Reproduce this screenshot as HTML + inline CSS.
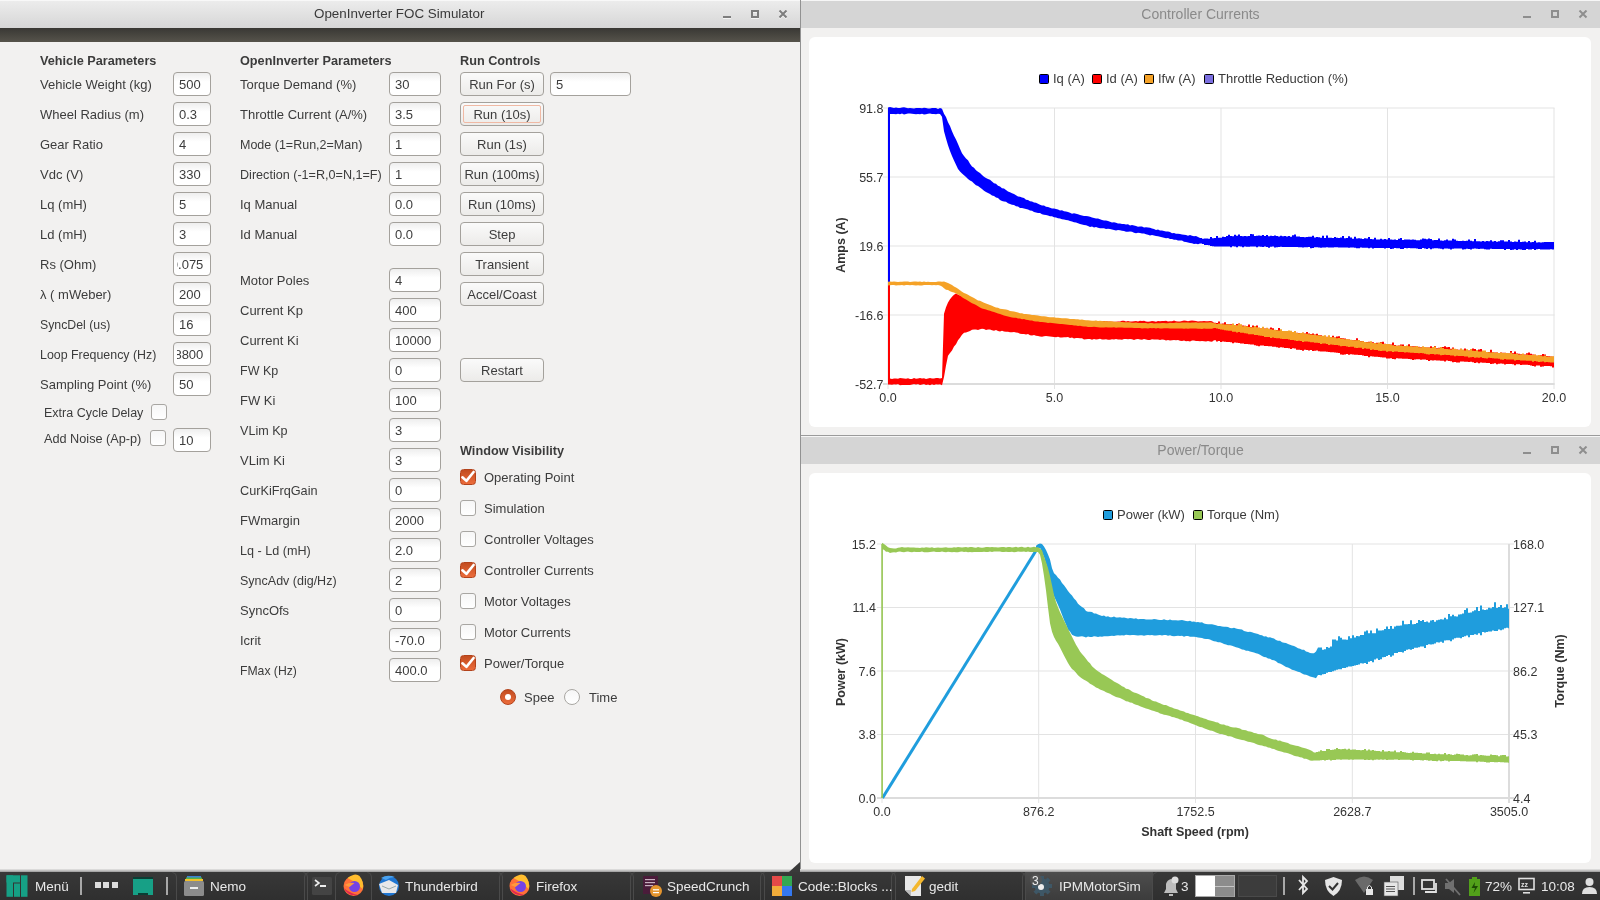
<!DOCTYPE html><html><head><meta charset="utf-8"><style>
*{margin:0;padding:0;box-sizing:border-box}
html,body{width:1600px;height:900px;overflow:hidden;background:#f2f1f0;font-family:"Liberation Sans",sans-serif;color:#3c3c3c}
.ab{position:absolute}
.t{position:absolute;white-space:nowrap;font-size:13px;line-height:16px}
.inp{position:absolute;height:24px;border:1px solid #a4a19c;border-radius:4px;background:linear-gradient(#eeeeee,#ffffff 40%,#ffffff);font-size:13px;line-height:23px;padding-left:5px;overflow:hidden;white-space:nowrap;color:#3c3c3c}
.btn{position:absolute;height:24px;width:84px;border:1px solid #a4a19c;border-radius:4px;background:linear-gradient(#fafafa,#ecebe9);font-size:13px;line-height:23px;text-align:center;white-space:nowrap;color:#3c3c3c}
.cb{position:absolute;width:16px;height:16px;border:1px solid #a8a6a2;border-radius:3px;background:linear-gradient(#f6f6f6,#ffffff)}
.cbon{position:absolute;width:16px;height:16px;border-radius:3.5px;background:linear-gradient(#c24c1f,#ec6c3b);border:1px solid #b3421a}
.hd{position:absolute;white-space:nowrap;font-size:12.7px;font-weight:bold;line-height:16px;color:#3c3c3c}

</style></head><body>
<div style="will-change:transform;position:absolute;left:0;top:0;width:1600px;height:900px">
<div class="ab" style="left:0;top:0;width:800px;height:28px;background:linear-gradient(#ececec,#d6d6d6);border-top:1px solid #f8f8f8"></div>
<div class="t" style="left:314px;top:6px;font-size:13.4px;color:#3a3a3a">OpenInverter FOC Simulator</div>
<svg class="ab" style="left:723px;top:10px" width="70" height="12" viewBox="0 0 70 12"><g transform="translate(0,1)"><rect x="0" y="6" width="8" height="2" fill="#f4f4f4"/><rect x="29" y="1" width="6" height="6" fill="none" stroke="#f4f4f4" stroke-width="2"/><path d="M56.5 0.5 L63.5 7.5 M63.5 0.5 L56.5 7.5" stroke="#f4f4f4" stroke-width="2"/></g><rect x="0" y="6" width="8" height="2" fill="#7d7d7d"/><rect x="29" y="1" width="6" height="6" fill="none" stroke="#7d7d7d" stroke-width="2"/><path d="M56.5 0.5 L63.5 7.5 M63.5 0.5 L56.5 7.5" stroke="#7d7d7d" stroke-width="2"/></svg>
<div class="ab" style="left:0;top:28px;width:800px;height:14px;background:linear-gradient(#393834,#56534b)"></div>
<div class="hd" style="left:40px;top:53px">Vehicle Parameters</div>
<div class="t" style="left:40px;top:77px;">Vehicle Weight (kg)</div>
<div class="inp" style="left:173px;top:72px;width:38px">500</div>
<div class="t" style="left:40px;top:107px;">Wheel Radius (m)</div>
<div class="inp" style="left:173px;top:102px;width:38px">0.3</div>
<div class="t" style="left:40px;top:137px;">Gear Ratio</div>
<div class="inp" style="left:173px;top:132px;width:38px">4</div>
<div class="t" style="left:40px;top:167px;">Vdc (V)</div>
<div class="inp" style="left:173px;top:162px;width:38px">330</div>
<div class="t" style="left:40px;top:197px;">Lq (mH)</div>
<div class="inp" style="left:173px;top:192px;width:38px">5</div>
<div class="t" style="left:40px;top:227px;">Ld (mH)</div>
<div class="inp" style="left:173px;top:222px;width:38px">3</div>
<div class="t" style="left:40px;top:257px;">Rs (Ohm)</div>
<div class="inp" style="left:173px;top:252px;width:38px;padding-left:0"><div class="ab" style="left:3px;top:0;right:1px;bottom:0;overflow:hidden"><span style="position:absolute;left:-6.2px">0.075</span></div></div>
<div class="t" style="left:40px;top:287px;">λ ( mWeber)</div>
<div class="inp" style="left:173px;top:282px;width:38px">200</div>
<div class="t" style="left:40px;top:317px;font-size:12.3px;">SyncDel (us)</div>
<div class="inp" style="left:173px;top:312px;width:38px">16</div>
<div class="t" style="left:40px;top:347px;font-size:12.4px;">Loop Frequency (Hz)</div>
<div class="inp" style="left:173px;top:342px;width:38px;padding-left:0"><div class="ab" style="left:3px;top:0;right:1px;bottom:0;overflow:hidden"><span style="position:absolute;left:-2.6px">8800</span></div></div>
<div class="t" style="left:40px;top:377px;">Sampling Point (%)</div>
<div class="inp" style="left:173px;top:372px;width:38px">50</div>
<div class="t" style="left:44px;top:405px;font-size:12.5px">Extra Cycle Delay</div>
<div class="cb" style="left:151px;top:404px"></div>
<div class="t" style="left:44px;top:431px;font-size:12.7px">Add Noise (Ap-p)</div>
<div class="cb" style="left:150px;top:430px"></div>
<div class="inp" style="left:173px;top:428px;width:38px">10</div>
<div class="hd" style="left:240px;top:53px">OpenInverter Parameters</div>
<div class="t" style="left:240px;top:77px;">Torque Demand (%)</div>
<div class="inp" style="left:389px;top:72px;width:52px">30</div>
<div class="t" style="left:240px;top:107px;">Throttle Current (A/%)</div>
<div class="inp" style="left:389px;top:102px;width:52px">3.5</div>
<div class="t" style="left:240px;top:137px;font-size:12.5px;">Mode (1=Run,2=Man)</div>
<div class="inp" style="left:389px;top:132px;width:52px">1</div>
<div class="t" style="left:240px;top:167px;font-size:12.6px;">Direction (-1=R,0=N,1=F)</div>
<div class="inp" style="left:389px;top:162px;width:52px">1</div>
<div class="t" style="left:240px;top:197px;">Iq Manual</div>
<div class="inp" style="left:389px;top:192px;width:52px">0.0</div>
<div class="t" style="left:240px;top:227px;">Id Manual</div>
<div class="inp" style="left:389px;top:222px;width:52px">0.0</div>
<div class="t" style="left:240px;top:273px;">Motor Poles</div>
<div class="inp" style="left:389px;top:268px;width:52px">4</div>
<div class="t" style="left:240px;top:303px;">Current Kp</div>
<div class="inp" style="left:389px;top:298px;width:52px">400</div>
<div class="t" style="left:240px;top:333px;">Current Ki</div>
<div class="inp" style="left:389px;top:328px;width:52px">10000</div>
<div class="t" style="left:240px;top:363px;font-size:12.5px;">FW Kp</div>
<div class="inp" style="left:389px;top:358px;width:52px">0</div>
<div class="t" style="left:240px;top:393px;">FW Ki</div>
<div class="inp" style="left:389px;top:388px;width:52px">100</div>
<div class="t" style="left:240px;top:423px;font-size:12.6px;">VLim Kp</div>
<div class="inp" style="left:389px;top:418px;width:52px">3</div>
<div class="t" style="left:240px;top:453px;">VLim Ki</div>
<div class="inp" style="left:389px;top:448px;width:52px">3</div>
<div class="t" style="left:240px;top:483px;font-size:12.7px;">CurKiFrqGain</div>
<div class="inp" style="left:389px;top:478px;width:52px">0</div>
<div class="t" style="left:240px;top:513px;">FWmargin</div>
<div class="inp" style="left:389px;top:508px;width:52px">2000</div>
<div class="t" style="left:240px;top:543px;font-size:12.6px;">Lq - Ld (mH)</div>
<div class="inp" style="left:389px;top:538px;width:52px">2.0</div>
<div class="t" style="left:240px;top:573px;font-size:12.5px;">SyncAdv (dig/Hz)</div>
<div class="inp" style="left:389px;top:568px;width:52px">2</div>
<div class="t" style="left:240px;top:603px;">SyncOfs</div>
<div class="inp" style="left:389px;top:598px;width:52px">0</div>
<div class="t" style="left:240px;top:633px;">Icrit</div>
<div class="inp" style="left:389px;top:628px;width:52px">-70.0</div>
<div class="t" style="left:240px;top:663px;font-size:12.2px;">FMax (Hz)</div>
<div class="inp" style="left:389px;top:658px;width:52px">400.0</div>
<div class="hd" style="left:460px;top:53px">Run Controls</div>
<div class="btn" style="left:460px;top:72px">Run For (s)</div>
<div class="btn" style="left:460px;top:102px"><div class="ab" style="left:2px;top:2px;right:2px;bottom:2px;border:1px solid #f0b9a4;border-radius:2px"></div>Run (10s)</div>
<div class="btn" style="left:460px;top:132px">Run (1s)</div>
<div class="btn" style="left:460px;top:162px">Run (100ms)</div>
<div class="btn" style="left:460px;top:192px">Run (10ms)</div>
<div class="btn" style="left:460px;top:222px">Step</div>
<div class="btn" style="left:460px;top:252px">Transient</div>
<div class="btn" style="left:460px;top:282px">Accel/Coast</div>
<div class="btn" style="left:460px;top:358px">Restart</div>
<div class="inp" style="left:550px;top:72px;width:81px">5</div>
<div class="hd" style="left:460px;top:443px">Window Visibility</div>
<div class="cbon" style="left:460px;top:469px"><svg class="ab" style="left:-1px;top:-1px" width="16" height="16" viewBox="0 0 16 16"><path d="M2.4 8.3 L6.4 11.9 L13.6 3" fill="none" stroke="#fff" stroke-width="2.6" stroke-linecap="round" stroke-linejoin="round"/></svg></div>
<div class="t" style="left:484px;top:470px">Operating Point</div>
<div class="cb" style="left:460px;top:500px"></div>
<div class="t" style="left:484px;top:501px">Simulation</div>
<div class="cb" style="left:460px;top:531px"></div>
<div class="t" style="left:484px;top:532px">Controller Voltages</div>
<div class="cbon" style="left:460px;top:562px"><svg class="ab" style="left:-1px;top:-1px" width="16" height="16" viewBox="0 0 16 16"><path d="M2.4 8.3 L6.4 11.9 L13.6 3" fill="none" stroke="#fff" stroke-width="2.6" stroke-linecap="round" stroke-linejoin="round"/></svg></div>
<div class="t" style="left:484px;top:563px">Controller Currents</div>
<div class="cb" style="left:460px;top:593px"></div>
<div class="t" style="left:484px;top:594px">Motor Voltages</div>
<div class="cb" style="left:460px;top:624px"></div>
<div class="t" style="left:484px;top:625px">Motor Currents</div>
<div class="cbon" style="left:460px;top:655px"><svg class="ab" style="left:-1px;top:-1px" width="16" height="16" viewBox="0 0 16 16"><path d="M2.4 8.3 L6.4 11.9 L13.6 3" fill="none" stroke="#fff" stroke-width="2.6" stroke-linecap="round" stroke-linejoin="round"/></svg></div>
<div class="t" style="left:484px;top:656px">Power/Torque</div>
<div class="ab" style="left:500px;top:689px;width:16px;height:16px;border-radius:50%;background:linear-gradient(#c24c1f,#ec6c3b);border:1px solid #b3421a"><div class="ab" style="left:4px;top:4px;width:6px;height:6px;border-radius:50%;background:#fff"></div></div>
<div class="t" style="left:524px;top:690px;width:29.5px;overflow:hidden">Speed</div>
<div class="ab" style="left:564px;top:689px;width:16px;height:16px;border-radius:50%;background:linear-gradient(#f6f6f6,#fff);border:1px solid #a8a6a2"></div>
<div class="t" style="left:589px;top:690px">Time</div>
<div class="ab" style="left:800px;top:0;width:1px;height:872px;background:#929292"></div>
<div class="ab" style="left:801px;top:0px;width:799px;height:1px;background:#f6f6f6"></div>
<div class="ab" style="left:801px;top:1px;width:799px;height:27px;background:#d5d5d5"></div>
<div class="t" style="left:801px;width:799px;text-align:center;top:6px;font-size:14px;color:#8a8a8a">Controller Currents</div>
<svg class="ab" style="left:1523px;top:10px" width="70" height="12" viewBox="0 0 70 12"><rect x="0" y="6" width="8" height="2" fill="#8e8e8e"/><rect x="29" y="1" width="6" height="6" fill="none" stroke="#8e8e8e" stroke-width="2"/><path d="M56.5 0.5 L63.5 7.5 M63.5 0.5 L56.5 7.5" stroke="#8e8e8e" stroke-width="2"/></svg>
<div class="ab" style="left:801px;top:435px;width:799px;height:1px;background:#9b9b9b"></div>
<div class="ab" style="left:801px;top:436px;width:799px;height:1px;background:#f6f6f6"></div>
<div class="ab" style="left:801px;top:437px;width:799px;height:27px;background:#d5d5d5"></div>
<div class="t" style="left:801px;width:799px;text-align:center;top:442px;font-size:14px;color:#8a8a8a">Power/Torque</div>
<svg class="ab" style="left:1523px;top:446px" width="70" height="12" viewBox="0 0 70 12"><rect x="0" y="6" width="8" height="2" fill="#8e8e8e"/><rect x="29" y="1" width="6" height="6" fill="none" stroke="#8e8e8e" stroke-width="2"/><path d="M56.5 0.5 L63.5 7.5 M63.5 0.5 L56.5 7.5" stroke="#8e8e8e" stroke-width="2"/></svg>
<div class="ab" style="left:809px;top:37px;width:782px;height:390px;background:#fff;border-radius:6px"></div>
<div class="ab" style="left:809px;top:473px;width:782px;height:390px;background:#fff;border-radius:6px"></div>
<svg class="ab" style="left:0;top:0" width="1600" height="900" viewBox="0 0 1600 900">
<g font-family="Liberation Sans, sans-serif" fill="#333">
<rect x="887.5" y="108" width="1" height="281" fill="#e3e3e3"/>
<rect x="1054.0" y="108" width="1" height="281" fill="#e3e3e3"/>
<rect x="1220.5" y="108" width="1" height="281" fill="#e3e3e3"/>
<rect x="1387.0" y="108" width="1" height="281" fill="#e3e3e3"/>
<rect x="1553.5" y="108" width="1" height="281" fill="#e3e3e3"/>
<rect x="883" y="107.5" width="671.5" height="1" fill="#e3e3e3"/>
<rect x="883" y="176.5" width="671.5" height="1" fill="#e3e3e3"/>
<rect x="883" y="245.5" width="671.5" height="1" fill="#e3e3e3"/>
<rect x="883" y="314.5" width="671.5" height="1" fill="#e3e3e3"/>
<rect x="883" y="383.5" width="671.5" height="1" fill="#e3e3e3"/>
<rect x="883" y="383" width="671.5" height="2" fill="#dcdcdc"/>
<text x="883.5" y="112.5" font-size="12.5" text-anchor="end">91.8</text>
<text x="883.5" y="181.5" font-size="12.5" text-anchor="end">55.7</text>
<text x="883.5" y="250.5" font-size="12.5" text-anchor="end">19.6</text>
<text x="883.5" y="319.5" font-size="12.5" text-anchor="end">-16.6</text>
<text x="883.5" y="388.5" font-size="12.5" text-anchor="end">-52.7</text>
<text x="888.0" y="401.5" font-size="12.5" text-anchor="middle">0.0</text>
<text x="1054.5" y="401.5" font-size="12.5" text-anchor="middle">5.0</text>
<text x="1221.0" y="401.5" font-size="12.5" text-anchor="middle">10.0</text>
<text x="1387.5" y="401.5" font-size="12.5" text-anchor="middle">15.0</text>
<text x="1554.0" y="401.5" font-size="12.5" text-anchor="middle">20.0</text>
<text transform="translate(845,245) rotate(-90)" font-size="12.5" font-weight="bold" text-anchor="middle">Amps (A)</text>
<rect x="1039.5" y="74.5" width="9" height="9" rx="1" fill="#0000ff" stroke="#000" stroke-width="1"/>
<text x="1053" y="83" font-size="13" fill="#3a3a3a">Iq (A)</text>
<rect x="1092.5" y="74.5" width="9" height="9" rx="1" fill="#ff0000" stroke="#000" stroke-width="1"/>
<text x="1106" y="83" font-size="13" fill="#3a3a3a">Id (A)</text>
<rect x="1144.5" y="74.5" width="9" height="9" rx="1" fill="#f5a227" stroke="#000" stroke-width="1"/>
<text x="1158" y="83" font-size="13" fill="#3a3a3a">Ifw (A)</text>
<rect x="1204.5" y="74.5" width="9" height="9" rx="1" fill="#7b6fe0" stroke="#000" stroke-width="1"/>
<text x="1218" y="83" font-size="13" fill="#3a3a3a">Throttle Reduction (%)</text>
</g>
<rect x="888" y="108" width="2" height="176" fill="#0000ff"/>
<polygon points="888.0,107.5 890.0,107.1 892.0,107.6 894.0,107.9 896.0,107.5 898.0,108.1 900.0,108.1 902.0,107.6 904.0,107.3 906.0,107.7 908.0,108.2 910.0,107.9 912.0,108.3 914.0,108.5 916.0,108.1 918.0,108.0 920.0,108.1 922.0,108.2 924.0,107.7 926.0,107.9 928.0,108.4 930.0,108.5 932.0,108.1 934.0,108.0 936.0,107.9 938.0,108.9 940.0,108.1 942.0,108.8 944.0,113.7 946.0,117.0 948.0,122.2 950.0,125.9 952.0,131.2 954.0,135.7 956.0,139.4 958.0,144.0 960.0,148.7 962.0,153.2 964.0,155.9 966.0,158.4 968.0,160.3 970.0,163.7 972.0,166.5 974.0,167.8 976.0,170.2 978.0,171.8 980.0,172.9 982.0,175.0 984.0,176.8 986.0,177.9 988.0,179.1 990.0,179.8 992.0,181.5 994.0,183.2 996.0,183.8 998.0,185.8 1000.0,186.6 1002.0,188.3 1004.0,188.6 1006.0,190.1 1008.0,191.4 1010.0,192.2 1012.0,193.2 1014.0,193.9 1016.0,195.3 1018.0,196.4 1020.0,196.8 1022.0,197.5 1024.0,198.0 1026.0,199.7 1028.0,200.1 1030.0,201.2 1032.0,201.6 1034.0,202.6 1036.0,202.7 1038.0,203.7 1040.0,204.8 1042.0,205.6 1044.0,205.5 1046.0,206.8 1048.0,206.9 1050.0,207.7 1052.0,208.5 1054.0,208.4 1056.0,209.0 1058.0,209.4 1060.0,210.4 1062.0,210.3 1064.0,211.3 1066.0,211.4 1068.0,212.1 1070.0,212.7 1072.0,213.7 1074.0,213.2 1076.0,213.8 1078.0,214.2 1080.0,214.9 1082.0,215.6 1084.0,216.1 1086.0,216.0 1088.0,216.2 1090.0,216.7 1092.0,217.5 1094.0,218.0 1096.0,218.6 1098.0,218.4 1100.0,219.3 1102.0,219.9 1104.0,220.6 1106.0,220.5 1108.0,220.9 1110.0,221.7 1112.0,222.6 1114.0,222.3 1116.0,222.7 1118.0,223.5 1120.0,223.6 1122.0,224.1 1124.0,224.0 1126.0,224.6 1128.0,224.2 1130.0,225.4 1132.0,224.9 1134.0,225.4 1136.0,226.1 1138.0,226.7 1140.0,226.5 1142.0,226.4 1144.0,227.4 1146.0,227.2 1148.0,227.6 1150.0,227.8 1152.0,228.4 1154.0,229.0 1156.0,229.9 1158.0,229.6 1160.0,230.5 1162.0,230.5 1164.0,231.0 1166.0,231.6 1168.0,231.5 1170.0,231.9 1172.0,233.2 1174.0,233.1 1176.0,233.8 1178.0,233.7 1180.0,234.1 1182.0,234.6 1184.0,234.7 1186.0,235.0 1188.0,235.7 1190.0,235.1 1192.0,235.8 1194.0,236.2 1196.0,235.9 1198.0,236.9 1200.0,237.9 1202.0,237.9 1202.0,238.8 1204.0,238.8 1204.0,238.4 1206.0,238.4 1206.0,238.6 1208.0,238.6 1208.0,238.8 1210.0,238.8 1210.0,237.1 1212.0,237.1 1212.0,238.3 1214.0,238.3 1214.0,238.1 1216.0,238.1 1216.0,235.9 1218.0,235.9 1218.0,237.8 1220.0,237.8 1220.0,237.7 1222.0,237.7 1222.0,236.7 1224.0,236.7 1224.0,237.1 1226.0,237.1 1226.0,236.1 1228.0,236.1 1228.0,234.8 1230.0,234.8 1230.0,236.1 1232.0,236.1 1232.0,236.3 1234.0,236.3 1234.0,234.8 1236.0,234.8 1236.0,235.8 1238.0,235.8 1238.0,234.5 1240.0,234.5 1240.0,236.0 1242.0,236.0 1242.0,236.2 1244.0,236.2 1244.0,235.9 1246.0,235.9 1246.0,236.2 1248.0,236.2 1248.0,236.1 1250.0,236.1 1250.0,233.9 1252.0,233.9 1252.0,234.2 1254.0,234.2 1254.0,236.0 1256.0,236.0 1256.0,235.8 1258.0,235.8 1258.0,235.6 1260.0,235.6 1260.0,235.7 1262.0,235.7 1262.0,235.0 1264.0,235.0 1264.0,235.9 1266.0,235.9 1266.0,234.9 1268.0,234.9 1268.0,236.3 1270.0,236.3 1270.0,235.7 1272.0,235.7 1272.0,236.0 1274.0,236.0 1274.0,235.6 1276.0,235.6 1276.0,236.1 1278.0,236.1 1278.0,236.5 1280.0,236.5 1280.0,235.8 1282.0,235.8 1282.0,236.2 1284.0,236.2 1284.0,235.9 1286.0,235.9 1286.0,236.4 1288.0,236.4 1288.0,236.1 1290.0,236.1 1290.0,236.8 1292.0,236.8 1292.0,235.2 1294.0,235.2 1294.0,234.5 1296.0,234.5 1296.0,236.5 1298.0,236.5 1298.0,236.5 1300.0,236.5 1300.0,237.1 1302.0,237.1 1302.0,236.9 1304.0,236.9 1304.0,237.2 1306.0,237.2 1306.0,236.9 1308.0,236.9 1308.0,236.8 1310.0,236.8 1310.0,236.8 1312.0,236.8 1312.0,235.7 1314.0,235.7 1314.0,237.5 1316.0,237.5 1316.0,237.1 1318.0,237.1 1318.0,237.2 1320.0,237.2 1320.0,237.8 1322.0,237.8 1322.0,235.7 1324.0,235.7 1324.0,237.9 1326.0,237.9 1326.0,235.6 1328.0,235.6 1328.0,237.8 1330.0,237.8 1330.0,237.7 1332.0,237.7 1332.0,238.1 1334.0,238.1 1334.0,236.9 1336.0,236.9 1336.0,237.7 1338.0,237.7 1338.0,238.0 1340.0,238.0 1340.0,237.6 1342.0,237.6 1342.0,236.1 1344.0,236.1 1344.0,238.3 1346.0,238.3 1346.0,238.0 1348.0,238.0 1348.0,236.2 1350.0,236.2 1350.0,237.4 1352.0,237.4 1352.0,238.7 1354.0,238.7 1354.0,236.7 1356.0,236.7 1356.0,238.5 1358.0,238.5 1358.0,238.2 1360.0,238.2 1360.0,238.5 1362.0,238.5 1362.0,238.9 1364.0,238.9 1364.0,238.3 1366.0,238.3 1366.0,238.4 1368.0,238.4 1368.0,236.9 1370.0,236.9 1370.0,238.9 1372.0,238.9 1372.0,239.3 1374.0,239.3 1374.0,237.8 1376.0,237.8 1376.0,239.4 1378.0,239.4 1378.0,239.5 1380.0,239.5 1380.0,238.8 1382.0,238.8 1382.0,239.5 1384.0,239.5 1384.0,239.0 1386.0,239.0 1386.0,239.5 1388.0,239.5 1388.0,237.9 1390.0,237.9 1390.0,239.4 1392.0,239.4 1392.0,239.7 1394.0,239.7 1394.0,239.5 1396.0,239.5 1396.0,240.0 1398.0,240.0 1398.0,238.7 1400.0,238.7 1400.0,238.1 1402.0,238.1 1402.0,239.9 1404.0,239.9 1404.0,239.5 1406.0,239.5 1406.0,239.6 1408.0,239.6 1408.0,239.6 1410.0,239.6 1410.0,239.7 1412.0,239.7 1412.0,239.5 1414.0,239.5 1414.0,239.7 1416.0,239.7 1416.0,240.3 1418.0,240.3 1418.0,240.3 1420.0,240.3 1420.0,239.6 1422.0,239.6 1422.0,238.4 1424.0,238.4 1424.0,238.7 1426.0,238.7 1426.0,239.2 1428.0,239.2 1428.0,238.5 1430.0,238.5 1430.0,239.0 1432.0,239.0 1432.0,240.2 1434.0,240.2 1434.0,239.9 1436.0,239.9 1436.0,239.9 1438.0,239.9 1438.0,238.4 1440.0,238.4 1440.0,240.4 1442.0,240.4 1442.0,240.7 1444.0,240.7 1444.0,240.2 1446.0,240.2 1446.0,239.5 1448.0,239.5 1448.0,240.5 1450.0,240.5 1450.0,240.5 1452.0,240.5 1452.0,238.8 1454.0,238.8 1454.0,239.5 1456.0,239.5 1456.0,240.7 1458.0,240.7 1458.0,240.9 1460.0,240.9 1460.0,241.1 1462.0,241.1 1462.0,240.8 1464.0,240.8 1464.0,241.0 1466.0,241.0 1466.0,240.7 1468.0,240.7 1468.0,239.6 1470.0,239.6 1470.0,240.8 1472.0,240.8 1472.0,241.2 1474.0,241.2 1474.0,238.9 1476.0,238.9 1476.0,241.2 1478.0,241.2 1478.0,241.2 1480.0,241.2 1480.0,241.4 1482.0,241.4 1482.0,241.1 1484.0,241.1 1484.0,241.5 1486.0,241.5 1486.0,241.0 1488.0,241.0 1488.0,241.2 1490.0,241.2 1490.0,240.3 1492.0,240.3 1492.0,241.4 1494.0,241.4 1494.0,241.1 1496.0,241.1 1496.0,241.8 1498.0,241.8 1498.0,241.2 1500.0,241.2 1500.0,240.2 1502.0,240.2 1502.0,240.2 1504.0,240.2 1504.0,241.4 1506.0,241.4 1506.0,241.5 1508.0,241.5 1508.0,239.9 1510.0,239.9 1510.0,241.4 1512.0,241.4 1512.0,241.9 1514.0,241.9 1514.0,241.5 1516.0,241.5 1516.0,241.8 1518.0,241.8 1518.0,239.8 1520.0,239.8 1520.0,242.0 1522.0,242.0 1522.0,241.8 1524.0,241.8 1524.0,241.6 1526.0,241.6 1526.0,242.2 1528.0,242.2 1528.0,240.9 1530.0,240.9 1530.0,242.2 1532.0,242.2 1532.0,242.0 1534.0,242.0 1534.0,240.7 1536.0,240.7 1536.0,242.4 1538.0,242.4 1538.0,242.3 1540.0,242.3 1540.0,242.5 1542.0,242.5 1542.0,242.3 1544.0,242.3 1544.0,242.0 1546.0,242.0 1546.0,242.0 1548.0,242.0 1548.0,242.0 1550.0,242.0 1550.0,242.0 1552.0,242.0 1552.0,242.1 1554.0,242.1 1554.0,242.6 1554.0,242.6 1554.0,249.3 1554.0,249.3 1554.0,249.5 1552.0,249.5 1552.0,249.2 1550.0,249.2 1550.0,249.4 1548.0,249.4 1548.0,249.4 1546.0,249.4 1546.0,249.6 1544.0,249.6 1544.0,249.4 1542.0,249.4 1542.0,249.4 1540.0,249.4 1540.0,249.1 1538.0,249.1 1538.0,249.2 1536.0,249.2 1536.0,249.9 1534.0,249.9 1534.0,249.1 1532.0,249.1 1532.0,249.4 1530.0,249.4 1530.0,249.4 1528.0,249.4 1528.0,249.0 1526.0,249.0 1526.0,250.0 1524.0,250.0 1524.0,250.1 1522.0,250.1 1522.0,249.4 1520.0,249.4 1520.0,249.2 1518.0,249.2 1518.0,250.1 1516.0,250.1 1516.0,249.3 1514.0,249.3 1514.0,249.7 1512.0,249.7 1512.0,250.1 1510.0,250.1 1510.0,249.1 1508.0,249.1 1508.0,249.0 1506.0,249.0 1506.0,249.9 1504.0,249.9 1504.0,249.1 1502.0,249.1 1502.0,249.0 1500.0,249.0 1500.0,249.0 1498.0,249.0 1498.0,249.0 1496.0,249.0 1496.0,248.9 1494.0,248.9 1494.0,249.0 1492.0,249.0 1492.0,248.7 1490.0,248.7 1490.0,249.4 1488.0,249.4 1488.0,249.5 1486.0,249.5 1486.0,249.3 1484.0,249.3 1484.0,248.7 1482.0,248.7 1482.0,248.7 1480.0,248.7 1480.0,248.9 1478.0,248.9 1478.0,248.8 1476.0,248.8 1476.0,248.6 1474.0,248.6 1474.0,248.7 1472.0,248.7 1472.0,249.4 1470.0,249.4 1470.0,248.9 1468.0,248.9 1468.0,248.8 1466.0,248.8 1466.0,249.3 1464.0,249.3 1464.0,249.6 1462.0,249.6 1462.0,248.5 1460.0,248.5 1460.0,248.6 1458.0,248.6 1458.0,248.6 1456.0,248.6 1456.0,248.4 1454.0,248.4 1454.0,248.7 1452.0,248.7 1452.0,249.4 1450.0,249.4 1450.0,248.7 1448.0,248.7 1448.0,248.4 1446.0,248.4 1446.0,248.5 1444.0,248.5 1444.0,249.2 1442.0,249.2 1442.0,248.7 1440.0,248.7 1440.0,248.4 1438.0,248.4 1438.0,248.3 1436.0,248.3 1436.0,248.3 1434.0,248.3 1434.0,248.4 1432.0,248.4 1432.0,249.2 1430.0,249.2 1430.0,248.2 1428.0,248.2 1428.0,248.9 1426.0,248.9 1426.0,248.5 1424.0,248.5 1424.0,248.1 1422.0,248.1 1422.0,248.9 1420.0,248.9 1420.0,248.9 1418.0,248.9 1418.0,248.4 1416.0,248.4 1416.0,248.2 1414.0,248.2 1414.0,248.3 1412.0,248.3 1412.0,248.3 1410.0,248.3 1410.0,248.1 1408.0,248.1 1408.0,248.2 1406.0,248.2 1406.0,248.1 1404.0,248.1 1404.0,249.0 1402.0,249.0 1402.0,249.0 1400.0,249.0 1400.0,248.2 1398.0,248.2 1398.0,248.2 1396.0,248.2 1396.0,248.1 1394.0,248.1 1394.0,248.7 1392.0,248.7 1392.0,248.9 1390.0,248.9 1390.0,248.0 1388.0,248.0 1388.0,247.9 1386.0,247.9 1386.0,248.6 1384.0,248.6 1384.0,247.9 1382.0,247.9 1382.0,247.9 1380.0,247.9 1380.0,247.9 1378.0,247.9 1378.0,248.0 1376.0,248.0 1376.0,247.9 1374.0,247.9 1374.0,248.6 1372.0,248.6 1372.0,247.7 1370.0,247.7 1370.0,248.2 1368.0,248.2 1368.0,247.7 1366.0,247.7 1366.0,247.8 1364.0,247.8 1364.0,247.7 1362.0,247.7 1362.0,247.6 1360.0,247.6 1360.0,248.2 1358.0,248.2 1358.0,248.3 1356.0,248.3 1356.0,247.7 1354.0,247.7 1354.0,247.4 1352.0,247.4 1352.0,247.6 1350.0,247.6 1350.0,247.7 1348.0,247.7 1348.0,247.4 1346.0,247.4 1346.0,247.6 1344.0,247.6 1344.0,247.6 1342.0,247.6 1342.0,247.4 1340.0,247.4 1340.0,247.5 1338.0,247.5 1338.0,247.3 1336.0,247.3 1336.0,247.3 1334.0,247.3 1334.0,247.4 1332.0,247.4 1332.0,247.5 1330.0,247.5 1330.0,247.6 1328.0,247.6 1328.0,247.3 1326.0,247.3 1326.0,247.5 1324.0,247.5 1324.0,247.5 1322.0,247.5 1322.0,247.7 1320.0,247.7 1320.0,247.4 1318.0,247.4 1318.0,247.2 1316.0,247.2 1316.0,247.2 1314.0,247.2 1314.0,247.9 1312.0,247.9 1312.0,248.2 1310.0,248.2 1310.0,247.0 1308.0,247.0 1308.0,247.2 1306.0,247.2 1306.0,247.3 1304.0,247.3 1304.0,247.6 1302.0,247.6 1302.0,247.2 1300.0,247.2 1300.0,247.2 1298.0,247.2 1298.0,247.0 1296.0,247.0 1296.0,246.9 1294.0,246.9 1294.0,247.1 1292.0,247.1 1292.0,247.0 1290.0,247.0 1290.0,246.9 1288.0,246.9 1288.0,247.1 1286.0,247.1 1286.0,247.0 1284.0,247.0 1284.0,247.0 1282.0,247.0 1282.0,246.8 1280.0,246.8 1280.0,247.0 1278.0,247.0 1278.0,247.3 1276.0,247.3 1276.0,247.5 1274.0,247.5 1274.0,246.6 1272.0,246.6 1272.0,246.8 1270.0,246.8 1270.0,247.8 1268.0,247.8 1268.0,246.9 1266.0,246.9 1266.0,246.6 1264.0,246.6 1264.0,247.1 1262.0,247.1 1262.0,246.8 1260.0,246.8 1260.0,246.5 1258.0,246.5 1258.0,247.2 1256.0,247.2 1256.0,246.4 1254.0,246.4 1254.0,246.4 1252.0,246.4 1252.0,246.4 1250.0,246.4 1250.0,246.7 1248.0,246.7 1248.0,246.7 1246.0,246.7 1246.0,246.6 1244.0,246.6 1244.0,247.3 1242.0,247.3 1242.0,246.4 1240.0,246.4 1240.0,246.3 1238.0,246.3 1238.0,247.3 1236.0,247.3 1236.0,246.4 1234.0,246.4 1234.0,246.3 1232.0,246.3 1232.0,247.3 1230.0,247.3 1230.0,246.6 1228.0,246.6 1228.0,246.5 1226.0,246.5 1226.0,246.4 1224.0,246.4 1224.0,246.5 1222.0,246.5 1222.0,246.5 1220.0,246.5 1220.0,246.5 1218.0,246.5 1218.0,246.5 1216.0,246.5 1216.0,246.6 1214.0,246.6 1214.0,246.3 1212.0,246.3 1212.0,245.9 1210.0,245.9 1210.0,245.2 1208.0,245.2 1208.0,245.1 1206.0,245.1 1206.0,245.1 1204.0,245.1 1204.0,244.0 1202.0,244.0 1202.0,243.5 1200.0,243.5 1198.0,244.3 1196.0,243.7 1194.0,243.9 1192.0,243.3 1190.0,243.1 1188.0,242.6 1186.0,242.0 1184.0,241.7 1182.0,240.6 1180.0,240.5 1178.0,240.4 1176.0,239.8 1174.0,239.8 1172.0,239.0 1170.0,238.9 1168.0,237.9 1166.0,238.2 1164.0,237.8 1162.0,237.2 1160.0,236.7 1158.0,236.2 1156.0,236.1 1154.0,235.5 1152.0,235.1 1150.0,235.5 1148.0,234.8 1146.0,234.3 1144.0,233.6 1142.0,233.5 1140.0,233.0 1138.0,232.8 1136.0,233.2 1134.0,232.7 1132.0,231.8 1130.0,231.5 1128.0,231.7 1126.0,231.8 1124.0,231.1 1122.0,230.7 1120.0,230.3 1118.0,229.9 1116.0,230.4 1114.0,230.0 1112.0,229.4 1110.0,229.0 1108.0,228.8 1106.0,229.1 1104.0,228.3 1102.0,228.3 1100.0,228.3 1098.0,227.8 1096.0,227.1 1094.0,227.4 1092.0,226.5 1090.0,227.1 1088.0,226.1 1086.0,225.2 1084.0,225.0 1082.0,224.6 1080.0,224.1 1078.0,223.2 1076.0,222.4 1074.0,222.3 1072.0,221.5 1070.0,221.0 1068.0,220.2 1066.0,219.9 1064.0,219.6 1062.0,219.2 1060.0,218.5 1058.0,218.2 1056.0,217.5 1054.0,217.2 1052.0,216.3 1050.0,216.3 1048.0,215.5 1046.0,214.9 1044.0,214.8 1042.0,214.2 1040.0,212.9 1038.0,212.9 1036.0,212.4 1034.0,212.1 1032.0,210.7 1030.0,210.4 1028.0,209.5 1026.0,209.1 1024.0,208.4 1022.0,207.9 1020.0,207.9 1018.0,206.6 1016.0,206.3 1014.0,205.0 1012.0,204.8 1010.0,203.9 1008.0,203.3 1006.0,201.7 1004.0,201.4 1002.0,200.9 1000.0,200.0 998.0,198.1 996.0,197.6 994.0,195.9 992.0,195.5 990.0,194.0 988.0,192.9 986.0,191.9 984.0,190.8 982.0,188.9 980.0,187.6 978.0,186.0 976.0,185.3 974.0,183.4 972.0,181.6 970.0,180.6 968.0,179.0 966.0,177.0 964.0,175.2 962.0,173.5 960.0,171.6 958.0,168.9 956.0,164.7 954.0,160.6 952.0,156.0 950.0,151.1 948.0,145.3 946.0,138.5 944.0,131.2 942.0,116.7 940.0,114.0 938.0,113.7 936.0,114.3 934.0,113.9 932.0,113.9 930.0,113.6 928.0,113.7 926.0,114.2 924.0,114.5 922.0,113.8 920.0,114.2 918.0,114.1 916.0,114.3 914.0,114.0 912.0,113.7 910.0,113.6 908.0,113.5 906.0,114.1 904.0,114.5 902.0,113.5 900.0,114.3 898.0,113.8 896.0,114.3 894.0,114.0 892.0,114.1 890.0,114.0 888.0,114.1" fill="#0000ff"/>
<rect x="888" y="283" width="2" height="101" fill="#ff0000"/>
<polygon points="888.0,378.9 890.0,378.4 892.0,378.9 894.0,378.4 896.0,378.6 898.0,378.7 900.0,377.9 902.0,378.2 904.0,378.5 906.0,378.7 908.0,378.3 910.0,378.9 912.0,378.9 914.0,377.9 916.0,378.7 918.0,378.6 920.0,377.9 922.0,378.5 924.0,378.3 926.0,379.0 928.0,378.6 930.0,377.9 932.0,378.4 934.0,378.6 936.0,377.9 938.0,378.0 940.0,378.4 942.0,377.9 944.0,313.8 946.0,307.3 948.0,302.4 950.0,299.3 952.0,296.8 954.0,294.7 956.0,293.4 958.0,294.5 960.0,295.5 962.0,295.7 964.0,297.1 966.0,297.6 968.0,299.0 970.0,299.4 972.0,301.3 974.0,301.5 976.0,303.3 978.0,304.4 980.0,304.8 982.0,305.5 984.0,306.2 986.0,307.4 988.0,308.4 990.0,308.4 992.0,309.8 994.0,310.7 996.0,310.5 998.0,311.7 1000.0,312.3 1002.0,312.6 1004.0,313.0 1006.0,313.7 1008.0,313.6 1010.0,314.4 1012.0,314.6 1014.0,314.8 1016.0,315.4 1018.0,316.1 1020.0,316.7 1022.0,316.8 1024.0,317.8 1026.0,318.0 1028.0,317.8 1030.0,317.9 1032.0,318.1 1034.0,318.8 1036.0,319.2 1038.0,318.9 1040.0,319.2 1042.0,319.7 1044.0,319.3 1046.0,319.2 1048.0,320.1 1050.0,320.4 1052.0,319.8 1054.0,320.3 1056.0,320.6 1058.0,320.6 1060.0,320.7 1062.0,320.0 1064.0,321.0 1066.0,320.7 1068.0,320.0 1070.0,320.7 1072.0,320.1 1074.0,320.9 1076.0,321.4 1078.0,320.5 1080.0,321.2 1082.0,321.2 1084.0,321.7 1086.0,320.9 1088.0,321.6 1090.0,321.3 1092.0,321.4 1094.0,321.5 1096.0,320.8 1098.0,321.9 1100.0,321.2 1102.0,321.5 1104.0,320.9 1106.0,320.9 1108.0,321.5 1110.0,321.5 1112.0,321.7 1114.0,321.7 1116.0,321.7 1118.0,321.6 1120.0,321.5 1122.0,320.7 1124.0,320.8 1126.0,321.4 1128.0,321.0 1130.0,321.5 1132.0,321.6 1134.0,321.3 1136.0,321.0 1138.0,321.4 1140.0,320.7 1142.0,320.9 1144.0,320.7 1146.0,321.4 1148.0,321.7 1150.0,321.4 1152.0,321.1 1154.0,321.3 1156.0,321.7 1158.0,321.0 1160.0,321.3 1162.0,321.1 1164.0,320.9 1166.0,320.8 1168.0,321.5 1170.0,321.3 1172.0,321.2 1174.0,320.6 1176.0,321.3 1178.0,321.4 1180.0,321.6 1182.0,320.9 1184.0,320.4 1186.0,320.8 1188.0,321.3 1190.0,320.8 1192.0,320.5 1194.0,320.8 1196.0,321.1 1198.0,321.5 1200.0,321.2 1202.0,321.2 1204.0,321.1 1206.0,321.3 1208.0,321.2 1210.0,321.1 1212.0,321.3 1214.0,322.7 1216.0,322.7 1216.0,323.1 1218.0,323.1 1218.0,321.5 1220.0,321.5 1220.0,323.7 1222.0,323.7 1222.0,323.6 1224.0,323.6 1224.0,322.2 1226.0,322.2 1226.0,324.0 1228.0,324.0 1228.0,324.2 1230.0,324.2 1230.0,324.2 1232.0,324.2 1232.0,325.2 1234.0,325.2 1234.0,325.1 1236.0,325.1 1236.0,323.9 1238.0,323.9 1238.0,323.6 1240.0,323.6 1240.0,325.5 1242.0,325.5 1242.0,325.5 1244.0,325.5 1244.0,325.7 1246.0,325.7 1246.0,326.1 1248.0,326.1 1248.0,324.6 1250.0,324.6 1250.0,327.0 1252.0,327.0 1252.0,325.6 1254.0,325.6 1254.0,327.6 1256.0,327.6 1256.0,325.4 1258.0,325.4 1258.0,327.7 1260.0,327.7 1260.0,328.4 1262.0,328.4 1262.0,328.3 1264.0,328.3 1264.0,328.5 1266.0,328.5 1266.0,328.3 1268.0,328.3 1268.0,328.7 1270.0,328.7 1270.0,327.5 1272.0,327.5 1272.0,328.3 1274.0,328.3 1274.0,329.9 1276.0,329.9 1276.0,329.9 1278.0,329.9 1278.0,328.0 1280.0,328.0 1280.0,330.1 1282.0,330.1 1282.0,331.1 1284.0,331.1 1284.0,331.0 1286.0,331.0 1286.0,331.2 1288.0,331.2 1288.0,331.5 1290.0,331.5 1290.0,332.0 1292.0,332.0 1292.0,332.2 1294.0,332.2 1294.0,332.7 1296.0,332.7 1296.0,332.7 1298.0,332.7 1298.0,333.0 1300.0,333.0 1300.0,333.2 1302.0,333.2 1302.0,332.7 1304.0,332.7 1304.0,333.6 1306.0,333.6 1306.0,332.0 1308.0,332.0 1308.0,333.6 1310.0,333.6 1310.0,334.0 1312.0,334.0 1312.0,333.4 1314.0,333.4 1314.0,334.6 1316.0,334.6 1316.0,333.8 1318.0,333.8 1318.0,335.1 1320.0,335.1 1320.0,335.3 1322.0,335.3 1322.0,336.3 1324.0,336.3 1324.0,336.4 1326.0,336.4 1326.0,336.7 1328.0,336.7 1328.0,336.4 1330.0,336.4 1330.0,337.2 1332.0,337.2 1332.0,335.8 1334.0,335.8 1334.0,337.5 1336.0,337.5 1336.0,336.6 1338.0,336.6 1338.0,336.3 1340.0,336.3 1340.0,337.9 1342.0,337.9 1342.0,338.3 1344.0,338.3 1344.0,338.4 1346.0,338.4 1346.0,339.5 1348.0,339.5 1348.0,339.6 1350.0,339.6 1350.0,340.0 1352.0,340.0 1352.0,340.2 1354.0,340.2 1354.0,340.1 1356.0,340.1 1356.0,338.2 1358.0,338.2 1358.0,340.8 1360.0,340.8 1360.0,340.9 1362.0,340.9 1362.0,341.3 1364.0,341.3 1364.0,341.9 1366.0,341.9 1366.0,342.0 1368.0,342.0 1368.0,341.7 1370.0,341.7 1370.0,342.6 1372.0,342.6 1372.0,342.3 1374.0,342.3 1374.0,343.3 1376.0,343.3 1376.0,342.8 1378.0,342.8 1378.0,343.7 1380.0,343.7 1380.0,341.9 1382.0,341.9 1382.0,341.8 1384.0,341.8 1384.0,343.8 1386.0,343.8 1386.0,344.9 1388.0,344.9 1388.0,344.3 1390.0,344.3 1390.0,344.5 1392.0,344.5 1392.0,342.5 1394.0,342.5 1394.0,344.9 1396.0,344.9 1396.0,345.8 1398.0,345.8 1398.0,345.6 1400.0,345.6 1400.0,344.4 1402.0,344.4 1402.0,344.6 1404.0,344.6 1404.0,346.2 1406.0,346.2 1406.0,346.1 1408.0,346.1 1408.0,344.2 1410.0,344.2 1410.0,346.3 1412.0,346.3 1412.0,346.2 1414.0,346.2 1414.0,346.2 1416.0,346.2 1416.0,346.8 1418.0,346.8 1418.0,346.7 1420.0,346.7 1420.0,347.2 1422.0,347.2 1422.0,346.9 1424.0,346.9 1424.0,347.7 1426.0,347.7 1426.0,347.6 1428.0,347.6 1428.0,347.5 1430.0,347.5 1430.0,346.2 1432.0,346.2 1432.0,348.0 1434.0,348.0 1434.0,346.1 1436.0,346.1 1436.0,348.3 1438.0,348.3 1438.0,347.8 1440.0,347.8 1440.0,348.3 1442.0,348.3 1442.0,346.9 1444.0,346.9 1444.0,346.3 1446.0,346.3 1446.0,347.3 1448.0,347.3 1448.0,347.1 1450.0,347.1 1450.0,348.8 1452.0,348.8 1452.0,347.6 1454.0,347.6 1454.0,349.0 1456.0,349.0 1456.0,349.5 1458.0,349.5 1458.0,349.7 1460.0,349.7 1460.0,348.8 1462.0,348.8 1462.0,350.3 1464.0,350.3 1464.0,348.5 1466.0,348.5 1466.0,350.7 1468.0,350.7 1468.0,350.4 1470.0,350.4 1470.0,350.1 1472.0,350.1 1472.0,348.5 1474.0,348.5 1474.0,349.1 1476.0,349.1 1476.0,350.5 1478.0,350.5 1478.0,349.6 1480.0,349.6 1480.0,349.0 1482.0,349.0 1482.0,351.0 1484.0,351.0 1484.0,351.2 1486.0,351.2 1486.0,352.0 1488.0,352.0 1488.0,352.0 1490.0,352.0 1490.0,349.8 1492.0,349.8 1492.0,352.3 1494.0,352.3 1494.0,352.5 1496.0,352.5 1496.0,352.5 1498.0,352.5 1498.0,353.1 1500.0,353.1 1500.0,352.6 1502.0,352.6 1502.0,352.8 1504.0,352.8 1504.0,352.8 1506.0,352.8 1506.0,353.4 1508.0,353.4 1508.0,353.4 1510.0,353.4 1510.0,351.0 1512.0,351.0 1512.0,353.3 1514.0,353.3 1514.0,351.6 1516.0,351.6 1516.0,353.4 1518.0,353.4 1518.0,353.8 1520.0,353.8 1520.0,354.3 1522.0,354.3 1522.0,354.8 1524.0,354.8 1524.0,354.6 1526.0,354.6 1526.0,353.2 1528.0,353.2 1528.0,352.5 1530.0,352.5 1530.0,353.7 1532.0,353.7 1532.0,354.6 1534.0,354.6 1534.0,354.8 1536.0,354.8 1536.0,355.8 1538.0,355.8 1538.0,355.0 1540.0,355.0 1540.0,355.3 1542.0,355.3 1542.0,353.9 1544.0,353.9 1544.0,354.4 1546.0,354.4 1546.0,356.0 1548.0,356.0 1548.0,356.2 1550.0,356.2 1550.0,356.6 1552.0,356.6 1552.0,356.7 1554.0,356.7 1554.0,356.4 1554.0,356.4 1554.0,366.4 1554.0,366.4 1554.0,367.4 1552.0,367.4 1552.0,366.3 1550.0,366.3 1550.0,366.0 1548.0,366.0 1548.0,365.9 1546.0,365.9 1546.0,365.9 1544.0,365.9 1544.0,366.5 1542.0,366.5 1542.0,366.7 1540.0,366.7 1540.0,365.6 1538.0,365.6 1538.0,365.4 1536.0,365.4 1536.0,366.5 1534.0,366.5 1534.0,366.0 1532.0,366.0 1532.0,365.4 1530.0,365.4 1530.0,365.1 1528.0,365.1 1528.0,364.7 1526.0,364.7 1526.0,364.8 1524.0,364.8 1524.0,364.7 1522.0,364.7 1522.0,364.9 1520.0,364.9 1520.0,364.3 1518.0,364.3 1518.0,364.2 1516.0,364.2 1516.0,365.3 1514.0,365.3 1514.0,364.3 1512.0,364.3 1512.0,364.0 1510.0,364.0 1510.0,364.1 1508.0,364.1 1508.0,363.9 1506.0,363.9 1506.0,364.4 1504.0,364.4 1504.0,363.7 1502.0,363.7 1502.0,363.5 1500.0,363.5 1500.0,363.8 1498.0,363.8 1498.0,364.2 1496.0,364.2 1496.0,363.2 1494.0,363.2 1494.0,363.8 1492.0,363.8 1492.0,364.0 1490.0,364.0 1490.0,363.0 1488.0,363.0 1488.0,362.9 1486.0,362.9 1486.0,362.7 1484.0,362.7 1484.0,362.7 1482.0,362.7 1482.0,362.6 1480.0,362.6 1480.0,363.2 1478.0,363.2 1478.0,362.6 1476.0,362.6 1476.0,362.9 1474.0,362.9 1474.0,362.3 1472.0,362.3 1472.0,361.8 1470.0,361.8 1470.0,362.0 1468.0,362.0 1468.0,361.7 1466.0,361.7 1466.0,361.8 1464.0,361.8 1464.0,361.4 1462.0,361.4 1462.0,361.5 1460.0,361.5 1460.0,362.4 1458.0,362.4 1458.0,362.5 1456.0,362.5 1456.0,362.0 1454.0,362.0 1454.0,362.3 1452.0,362.3 1452.0,361.2 1450.0,361.2 1450.0,361.1 1448.0,361.1 1448.0,360.6 1446.0,360.6 1446.0,361.5 1444.0,361.5 1444.0,360.7 1442.0,360.7 1442.0,360.8 1440.0,360.8 1440.0,360.4 1438.0,360.4 1438.0,360.4 1436.0,360.4 1436.0,360.2 1434.0,360.2 1434.0,360.4 1432.0,360.4 1432.0,360.2 1430.0,360.2 1430.0,361.1 1428.0,361.1 1428.0,360.0 1426.0,360.0 1426.0,359.6 1424.0,359.6 1424.0,359.5 1422.0,359.5 1422.0,359.8 1420.0,359.8 1420.0,359.2 1418.0,359.2 1418.0,359.3 1416.0,359.3 1416.0,359.4 1414.0,359.4 1414.0,360.1 1412.0,360.1 1412.0,359.3 1410.0,359.3 1410.0,359.1 1408.0,359.1 1408.0,358.8 1406.0,358.8 1406.0,358.8 1404.0,358.8 1404.0,358.7 1402.0,358.7 1402.0,358.5 1400.0,358.5 1400.0,358.5 1398.0,358.5 1398.0,358.2 1396.0,358.2 1396.0,359.2 1394.0,359.2 1394.0,359.1 1392.0,359.1 1392.0,358.2 1390.0,358.2 1390.0,358.5 1388.0,358.5 1388.0,358.5 1386.0,358.5 1386.0,357.4 1384.0,357.4 1384.0,357.5 1382.0,357.5 1382.0,357.2 1380.0,357.2 1380.0,357.1 1378.0,357.1 1378.0,356.8 1376.0,356.8 1376.0,356.7 1374.0,356.7 1374.0,356.4 1372.0,356.4 1372.0,356.3 1370.0,356.3 1370.0,357.2 1368.0,357.2 1368.0,356.1 1366.0,356.1 1366.0,355.9 1364.0,355.9 1364.0,355.5 1362.0,355.5 1362.0,355.0 1360.0,355.0 1360.0,354.9 1358.0,354.9 1358.0,354.8 1356.0,354.8 1356.0,354.7 1354.0,354.7 1354.0,354.6 1352.0,354.6 1352.0,354.2 1350.0,354.2 1350.0,354.8 1348.0,354.8 1348.0,353.9 1346.0,353.9 1346.0,354.4 1344.0,354.4 1344.0,354.7 1342.0,354.7 1342.0,354.4 1340.0,354.4 1340.0,353.0 1338.0,353.0 1338.0,352.8 1336.0,352.8 1336.0,352.5 1334.0,352.5 1334.0,352.3 1332.0,352.3 1332.0,352.2 1330.0,352.2 1330.0,352.1 1328.0,352.1 1328.0,351.8 1326.0,351.8 1326.0,351.4 1324.0,351.4 1324.0,351.4 1322.0,351.4 1322.0,351.4 1320.0,351.4 1320.0,351.2 1318.0,351.2 1318.0,350.6 1316.0,350.6 1316.0,350.7 1314.0,350.7 1314.0,351.0 1312.0,351.0 1312.0,350.1 1310.0,350.1 1310.0,350.4 1308.0,350.4 1308.0,350.0 1306.0,350.0 1306.0,349.7 1304.0,349.7 1304.0,350.7 1302.0,350.7 1302.0,349.9 1300.0,349.9 1300.0,349.7 1298.0,349.7 1298.0,349.8 1296.0,349.8 1296.0,348.5 1294.0,348.5 1294.0,348.3 1292.0,348.3 1292.0,348.9 1290.0,348.9 1290.0,348.2 1288.0,348.2 1288.0,348.1 1286.0,348.1 1286.0,347.9 1284.0,347.9 1284.0,347.5 1282.0,347.5 1282.0,347.2 1280.0,347.2 1280.0,347.7 1278.0,347.7 1278.0,347.2 1276.0,347.2 1276.0,346.7 1274.0,346.7 1274.0,346.8 1272.0,346.8 1272.0,346.2 1270.0,346.2 1270.0,346.3 1268.0,346.3 1268.0,345.9 1266.0,345.9 1266.0,345.9 1264.0,345.9 1264.0,345.4 1262.0,345.4 1262.0,345.4 1260.0,345.4 1260.0,346.3 1258.0,346.3 1258.0,345.8 1256.0,345.8 1256.0,345.3 1254.0,345.3 1254.0,344.4 1252.0,344.4 1252.0,344.4 1250.0,344.4 1250.0,344.2 1248.0,344.2 1248.0,344.1 1246.0,344.1 1246.0,343.9 1244.0,343.9 1244.0,343.5 1242.0,343.5 1242.0,343.4 1240.0,343.4 1240.0,343.0 1238.0,343.0 1238.0,342.8 1236.0,342.8 1236.0,342.5 1234.0,342.5 1234.0,343.3 1232.0,343.3 1232.0,342.2 1230.0,342.2 1230.0,342.0 1228.0,342.0 1228.0,341.9 1226.0,341.9 1226.0,341.8 1224.0,341.8 1224.0,341.5 1222.0,341.5 1222.0,341.9 1220.0,341.9 1220.0,340.9 1218.0,340.9 1218.0,341.5 1216.0,341.5 1216.0,340.2 1214.0,340.2 1212.0,341.7 1210.0,341.4 1208.0,341.0 1206.0,341.6 1204.0,341.3 1202.0,340.9 1200.0,341.2 1198.0,341.0 1196.0,341.0 1194.0,340.5 1192.0,340.6 1190.0,341.4 1188.0,341.1 1186.0,341.3 1184.0,340.5 1182.0,341.0 1180.0,340.8 1178.0,340.0 1176.0,340.3 1174.0,340.1 1172.0,340.2 1170.0,340.6 1168.0,339.9 1166.0,340.4 1164.0,339.8 1162.0,339.6 1160.0,339.9 1158.0,339.4 1156.0,339.5 1154.0,339.5 1152.0,339.2 1150.0,340.0 1148.0,340.1 1146.0,339.5 1144.0,339.0 1142.0,339.8 1140.0,339.4 1138.0,339.1 1136.0,339.3 1134.0,340.0 1132.0,339.2 1130.0,338.9 1128.0,339.3 1126.0,339.0 1124.0,339.1 1122.0,339.7 1120.0,339.4 1118.0,339.4 1116.0,339.1 1114.0,339.5 1112.0,339.2 1110.0,339.7 1108.0,339.8 1106.0,339.3 1104.0,339.5 1102.0,339.6 1100.0,338.8 1098.0,339.2 1096.0,339.5 1094.0,339.1 1092.0,339.8 1090.0,339.0 1088.0,338.9 1086.0,339.3 1084.0,339.4 1082.0,338.2 1080.0,338.3 1078.0,338.0 1076.0,337.9 1074.0,338.4 1072.0,337.5 1070.0,338.1 1068.0,337.1 1066.0,337.2 1064.0,337.2 1062.0,337.6 1060.0,337.4 1058.0,336.7 1056.0,337.3 1054.0,336.9 1052.0,336.7 1050.0,336.4 1048.0,336.3 1046.0,336.1 1044.0,336.3 1042.0,336.7 1040.0,336.4 1038.0,335.9 1036.0,335.8 1034.0,335.1 1032.0,335.6 1030.0,335.2 1028.0,334.0 1026.0,334.4 1024.0,334.0 1022.0,334.0 1020.0,333.7 1018.0,332.8 1016.0,332.4 1014.0,332.1 1012.0,332.2 1010.0,332.3 1008.0,331.7 1006.0,331.7 1004.0,331.5 1002.0,330.7 1000.0,331.4 998.0,331.0 996.0,330.0 994.0,330.8 992.0,330.2 990.0,329.6 988.0,329.5 986.0,329.9 984.0,329.1 982.0,328.8 980.0,329.3 978.0,329.9 976.0,329.5 974.0,329.5 972.0,329.8 970.0,330.9 968.0,331.7 966.0,332.6 964.0,332.7 962.0,334.8 960.0,337.7 958.0,340.3 956.0,344.2 954.0,346.4 952.0,350.4 950.0,352.9 948.0,355.7 946.0,365.5 944.0,377.0 942.0,385.2 940.0,384.2 938.0,384.4 936.0,384.2 934.0,385.1 932.0,384.2 930.0,385.2 928.0,384.6 926.0,385.1 924.0,384.1 922.0,384.4 920.0,385.0 918.0,384.1 916.0,384.4 914.0,384.0 912.0,384.6 910.0,385.0 908.0,385.1 906.0,384.9 904.0,385.0 902.0,385.0 900.0,385.2 898.0,384.1 896.0,384.5 894.0,384.3 892.0,384.8 890.0,384.5 888.0,384.5" fill="#ff0000"/>
<polygon points="888.0,281.7 890.0,281.5 892.0,281.8 894.0,281.6 896.0,281.8 898.0,282.0 900.0,281.7 902.0,281.8 904.0,281.5 906.0,281.6 908.0,281.6 910.0,281.9 912.0,281.7 914.0,281.6 916.0,281.6 918.0,281.7 920.0,281.5 922.0,281.9 924.0,281.6 926.0,281.9 928.0,281.7 930.0,281.9 932.0,281.9 934.0,281.9 936.0,281.9 938.0,281.6 940.0,281.6 942.0,281.7 944.0,281.6 946.0,282.2 948.0,283.0 950.0,284.1 952.0,285.0 954.0,286.4 956.0,287.6 958.0,288.7 960.0,290.2 962.0,291.7 964.0,293.0 966.0,293.8 968.0,294.8 970.0,296.1 972.0,296.9 974.0,298.1 976.0,299.3 978.0,300.5 980.0,300.8 982.0,301.7 984.0,302.7 986.0,303.5 988.0,304.3 990.0,305.1 992.0,305.8 994.0,306.7 996.0,307.5 998.0,307.8 1000.0,308.7 1002.0,309.0 1004.0,309.2 1006.0,309.6 1008.0,310.1 1010.0,311.0 1012.0,311.2 1014.0,311.6 1016.0,311.9 1018.0,312.5 1020.0,313.2 1022.0,313.3 1024.0,314.1 1026.0,313.9 1028.0,314.3 1030.0,314.4 1032.0,315.1 1034.0,314.9 1036.0,315.2 1038.0,315.6 1040.0,316.1 1042.0,316.2 1044.0,316.3 1046.0,316.5 1048.0,316.9 1050.0,317.2 1052.0,317.3 1054.0,317.2 1056.0,317.7 1058.0,317.8 1060.0,318.0 1062.0,318.2 1064.0,318.3 1066.0,318.3 1068.0,318.4 1070.0,319.0 1072.0,319.0 1074.0,319.1 1076.0,319.3 1078.0,319.2 1080.0,319.7 1082.0,319.6 1084.0,320.0 1086.0,320.2 1088.0,320.2 1090.0,320.5 1092.0,320.8 1094.0,320.7 1096.0,320.5 1098.0,321.0 1100.0,320.7 1102.0,321.1 1104.0,321.3 1106.0,321.0 1108.0,321.5 1110.0,321.2 1112.0,321.3 1114.0,321.7 1116.0,321.8 1118.0,322.0 1120.0,322.0 1122.0,322.1 1124.0,322.3 1126.0,322.2 1128.0,322.2 1130.0,322.2 1132.0,322.7 1134.0,322.7 1136.0,322.5 1138.0,323.0 1140.0,322.9 1142.0,322.9 1144.0,323.1 1146.0,323.0 1148.0,323.4 1150.0,323.0 1152.0,323.0 1154.0,323.4 1156.0,323.3 1158.0,323.2 1160.0,323.2 1162.0,323.0 1164.0,323.0 1166.0,323.2 1168.0,323.2 1170.0,322.8 1172.0,322.9 1174.0,322.9 1176.0,322.6 1178.0,322.8 1180.0,322.8 1182.0,322.5 1184.0,322.5 1186.0,322.5 1188.0,322.6 1190.0,322.7 1192.0,322.5 1194.0,322.5 1196.0,322.3 1198.0,322.7 1200.0,322.5 1202.0,322.4 1204.0,322.4 1206.0,322.6 1208.0,322.4 1210.0,322.2 1212.0,322.5 1214.0,323.3 1216.0,323.3 1216.0,323.9 1218.0,323.9 1218.0,323.6 1220.0,323.6 1220.0,324.0 1222.0,324.0 1222.0,324.2 1224.0,324.2 1224.0,324.5 1226.0,324.5 1226.0,324.3 1228.0,324.3 1228.0,324.5 1230.0,324.5 1230.0,325.1 1232.0,325.1 1232.0,323.4 1234.0,323.4 1234.0,325.0 1236.0,325.0 1236.0,325.3 1238.0,325.3 1238.0,323.8 1240.0,323.8 1240.0,324.3 1242.0,324.3 1242.0,326.3 1244.0,326.3 1244.0,326.1 1246.0,326.1 1246.0,326.2 1248.0,326.2 1248.0,326.9 1250.0,326.9 1250.0,327.2 1252.0,327.2 1252.0,327.2 1254.0,327.2 1254.0,326.0 1256.0,326.0 1256.0,327.3 1258.0,327.3 1258.0,327.8 1260.0,327.8 1260.0,328.3 1262.0,328.3 1262.0,326.7 1264.0,326.7 1264.0,328.8 1266.0,328.8 1266.0,327.7 1268.0,327.7 1268.0,329.0 1270.0,329.0 1270.0,329.3 1272.0,329.3 1272.0,329.8 1274.0,329.8 1274.0,329.7 1276.0,329.7 1276.0,330.2 1278.0,330.2 1278.0,330.5 1280.0,330.5 1280.0,329.2 1282.0,329.2 1282.0,330.9 1284.0,330.9 1284.0,331.1 1286.0,331.1 1286.0,330.9 1288.0,330.9 1288.0,330.6 1290.0,330.6 1290.0,330.7 1292.0,330.7 1292.0,332.0 1294.0,332.0 1294.0,330.9 1296.0,330.9 1296.0,333.0 1298.0,333.0 1298.0,333.2 1300.0,333.2 1300.0,333.1 1302.0,333.1 1302.0,332.4 1304.0,332.4 1304.0,333.8 1306.0,333.8 1306.0,333.8 1308.0,333.8 1308.0,334.3 1310.0,334.3 1310.0,334.6 1312.0,334.6 1312.0,334.8 1314.0,334.8 1314.0,334.7 1316.0,334.7 1316.0,335.2 1318.0,335.2 1318.0,335.2 1320.0,335.2 1320.0,335.7 1322.0,335.7 1322.0,335.8 1324.0,335.8 1324.0,335.2 1326.0,335.2 1326.0,336.9 1328.0,336.9 1328.0,335.2 1330.0,335.2 1330.0,336.9 1332.0,336.9 1332.0,337.3 1334.0,337.3 1334.0,337.6 1336.0,337.6 1336.0,338.3 1338.0,338.3 1338.0,337.9 1340.0,337.9 1340.0,338.5 1342.0,338.5 1342.0,338.7 1344.0,338.7 1344.0,339.3 1346.0,339.3 1346.0,339.0 1348.0,339.0 1348.0,339.4 1350.0,339.4 1350.0,339.7 1352.0,339.7 1352.0,340.2 1354.0,340.2 1354.0,340.3 1356.0,340.3 1356.0,340.3 1358.0,340.3 1358.0,340.1 1360.0,340.1 1360.0,341.2 1362.0,341.2 1362.0,341.2 1364.0,341.2 1364.0,341.9 1366.0,341.9 1366.0,342.2 1368.0,342.2 1368.0,342.2 1370.0,342.2 1370.0,341.2 1372.0,341.2 1372.0,342.9 1374.0,342.9 1374.0,342.9 1376.0,342.9 1376.0,343.6 1378.0,343.6 1378.0,342.5 1380.0,342.5 1380.0,342.4 1382.0,342.4 1382.0,344.1 1384.0,344.1 1384.0,344.0 1386.0,344.0 1386.0,343.9 1388.0,343.9 1388.0,343.9 1390.0,343.9 1390.0,345.1 1392.0,345.1 1392.0,345.3 1394.0,345.3 1394.0,345.7 1396.0,345.7 1396.0,345.8 1398.0,345.8 1398.0,345.8 1400.0,345.8 1400.0,345.6 1402.0,345.6 1402.0,346.0 1404.0,346.0 1404.0,346.0 1406.0,346.0 1406.0,345.5 1408.0,345.5 1408.0,346.2 1410.0,346.2 1410.0,346.2 1412.0,346.2 1412.0,346.7 1414.0,346.7 1414.0,346.4 1416.0,346.4 1416.0,345.9 1418.0,345.9 1418.0,347.2 1420.0,347.2 1420.0,347.5 1422.0,347.5 1422.0,346.2 1424.0,346.2 1424.0,347.1 1426.0,347.1 1426.0,347.6 1428.0,347.6 1428.0,347.6 1430.0,347.6 1430.0,348.0 1432.0,348.0 1432.0,347.1 1434.0,347.1 1434.0,346.6 1436.0,346.6 1436.0,348.7 1438.0,348.7 1438.0,348.3 1440.0,348.3 1440.0,347.0 1442.0,347.0 1442.0,347.9 1444.0,347.9 1444.0,349.1 1446.0,349.1 1446.0,349.0 1448.0,349.0 1448.0,349.3 1450.0,349.3 1450.0,349.6 1452.0,349.6 1452.0,348.5 1454.0,348.5 1454.0,348.7 1456.0,348.7 1456.0,349.6 1458.0,349.6 1458.0,350.0 1460.0,350.0 1460.0,348.8 1462.0,348.8 1462.0,349.5 1464.0,349.5 1464.0,350.6 1466.0,350.6 1466.0,349.2 1468.0,349.2 1468.0,350.8 1470.0,350.8 1470.0,349.1 1472.0,349.1 1472.0,350.7 1474.0,350.7 1474.0,350.9 1476.0,350.9 1476.0,350.3 1478.0,350.3 1478.0,351.5 1480.0,351.5 1480.0,351.4 1482.0,351.4 1482.0,350.6 1484.0,350.6 1484.0,350.4 1486.0,350.4 1486.0,352.0 1488.0,352.0 1488.0,352.2 1490.0,352.2 1490.0,352.5 1492.0,352.5 1492.0,352.3 1494.0,352.3 1494.0,352.8 1496.0,352.8 1496.0,352.5 1498.0,352.5 1498.0,353.0 1500.0,353.0 1500.0,352.6 1502.0,352.6 1502.0,352.9 1504.0,352.9 1504.0,353.0 1506.0,353.0 1506.0,353.1 1508.0,353.1 1508.0,353.3 1510.0,353.3 1510.0,352.5 1512.0,352.5 1512.0,354.1 1514.0,354.1 1514.0,353.9 1516.0,353.9 1516.0,353.7 1518.0,353.7 1518.0,354.5 1520.0,354.5 1520.0,354.5 1522.0,354.5 1522.0,353.4 1524.0,353.4 1524.0,355.0 1526.0,355.0 1526.0,354.6 1528.0,354.6 1528.0,355.1 1530.0,355.1 1530.0,355.1 1532.0,355.1 1532.0,354.9 1534.0,354.9 1534.0,354.6 1536.0,354.6 1536.0,355.5 1538.0,355.5 1538.0,354.9 1540.0,354.9 1540.0,355.7 1542.0,355.7 1542.0,356.3 1544.0,356.3 1544.0,355.4 1546.0,355.4 1546.0,356.5 1548.0,356.5 1548.0,356.7 1550.0,356.7 1550.0,356.5 1552.0,356.5 1552.0,356.3 1554.0,356.3 1554.0,356.8 1554.0,356.8 1554.0,363.2 1554.0,363.2 1554.0,362.5 1552.0,362.5 1552.0,362.4 1550.0,362.4 1550.0,362.2 1548.0,362.2 1548.0,362.1 1546.0,362.1 1546.0,362.2 1544.0,362.2 1544.0,361.5 1542.0,361.5 1542.0,361.7 1540.0,361.7 1540.0,362.0 1538.0,362.0 1538.0,361.5 1536.0,361.5 1536.0,361.0 1534.0,361.0 1534.0,361.7 1532.0,361.7 1532.0,360.7 1530.0,360.7 1530.0,360.7 1528.0,360.7 1528.0,360.8 1526.0,360.8 1526.0,360.4 1524.0,360.4 1524.0,360.5 1522.0,360.5 1522.0,360.5 1520.0,360.5 1520.0,359.9 1518.0,359.9 1518.0,359.9 1516.0,359.9 1516.0,360.4 1514.0,360.4 1514.0,359.6 1512.0,359.6 1512.0,359.4 1510.0,359.4 1510.0,359.5 1508.0,359.5 1508.0,359.4 1506.0,359.4 1506.0,359.1 1504.0,359.1 1504.0,359.8 1502.0,359.8 1502.0,359.4 1500.0,359.4 1500.0,358.8 1498.0,358.8 1498.0,358.4 1496.0,358.4 1496.0,358.5 1494.0,358.5 1494.0,358.3 1492.0,358.3 1492.0,357.9 1490.0,357.9 1490.0,357.8 1488.0,357.8 1488.0,358.5 1486.0,358.5 1486.0,358.2 1484.0,358.2 1484.0,358.0 1482.0,358.0 1482.0,357.3 1480.0,357.3 1480.0,357.7 1478.0,357.7 1478.0,357.5 1476.0,357.5 1476.0,357.8 1474.0,357.8 1474.0,357.0 1472.0,357.0 1472.0,357.2 1470.0,357.2 1470.0,357.4 1468.0,357.4 1468.0,356.6 1466.0,356.6 1466.0,356.5 1464.0,356.5 1464.0,356.1 1462.0,356.1 1462.0,356.1 1460.0,356.1 1460.0,355.9 1458.0,355.9 1458.0,355.8 1456.0,355.8 1456.0,356.2 1454.0,356.2 1454.0,355.6 1452.0,355.6 1452.0,355.6 1450.0,355.6 1450.0,355.1 1448.0,355.1 1448.0,354.9 1446.0,354.9 1446.0,354.8 1444.0,354.8 1444.0,355.0 1442.0,355.0 1442.0,355.2 1440.0,355.2 1440.0,354.4 1438.0,354.4 1438.0,354.3 1436.0,354.3 1436.0,354.4 1434.0,354.4 1434.0,354.0 1432.0,354.0 1432.0,354.0 1430.0,354.0 1430.0,354.5 1428.0,354.5 1428.0,354.3 1426.0,354.3 1426.0,353.7 1424.0,353.7 1424.0,353.3 1422.0,353.3 1422.0,353.1 1420.0,353.1 1420.0,353.2 1418.0,353.2 1418.0,353.0 1416.0,353.0 1416.0,353.0 1414.0,353.0 1414.0,352.8 1412.0,352.8 1412.0,352.7 1410.0,352.7 1410.0,352.4 1408.0,352.4 1408.0,352.2 1406.0,352.2 1406.0,352.4 1404.0,352.4 1404.0,352.1 1402.0,352.1 1402.0,351.9 1400.0,351.9 1400.0,351.9 1398.0,351.9 1398.0,351.6 1396.0,351.6 1396.0,351.5 1394.0,351.5 1394.0,351.9 1392.0,351.9 1392.0,351.3 1390.0,351.3 1390.0,351.2 1388.0,351.2 1388.0,351.7 1386.0,351.7 1386.0,350.8 1384.0,350.8 1384.0,350.8 1382.0,350.8 1382.0,351.0 1380.0,351.0 1380.0,350.7 1378.0,350.7 1378.0,349.9 1376.0,349.9 1376.0,350.1 1374.0,350.1 1374.0,349.4 1372.0,349.4 1372.0,349.9 1370.0,349.9 1370.0,348.7 1368.0,348.7 1368.0,348.7 1366.0,348.7 1366.0,348.3 1364.0,348.3 1364.0,348.9 1362.0,348.9 1362.0,347.7 1360.0,347.7 1360.0,347.8 1358.0,347.8 1358.0,347.9 1356.0,347.9 1356.0,347.7 1354.0,347.7 1354.0,346.8 1352.0,346.8 1352.0,346.7 1350.0,346.7 1350.0,347.0 1348.0,347.0 1348.0,346.4 1346.0,346.4 1346.0,346.0 1344.0,346.0 1344.0,345.9 1342.0,345.9 1342.0,346.3 1340.0,346.3 1340.0,345.4 1338.0,345.4 1338.0,345.0 1336.0,345.0 1336.0,344.9 1334.0,344.9 1334.0,344.7 1332.0,344.7 1332.0,344.5 1330.0,344.5 1330.0,344.9 1328.0,344.9 1328.0,344.1 1326.0,344.1 1326.0,343.6 1324.0,343.6 1324.0,343.6 1322.0,343.6 1322.0,344.0 1320.0,344.0 1320.0,343.1 1318.0,343.1 1318.0,342.7 1316.0,342.7 1316.0,342.7 1314.0,342.7 1314.0,342.3 1312.0,342.3 1312.0,342.2 1310.0,342.2 1310.0,341.8 1308.0,341.8 1308.0,341.6 1306.0,341.6 1306.0,341.5 1304.0,341.5 1304.0,342.0 1302.0,342.0 1302.0,341.1 1300.0,341.1 1300.0,340.8 1298.0,340.8 1298.0,341.0 1296.0,341.0 1296.0,340.6 1294.0,340.6 1294.0,340.1 1292.0,340.1 1292.0,339.9 1290.0,339.9 1290.0,339.5 1288.0,339.5 1288.0,339.1 1286.0,339.1 1286.0,338.9 1284.0,338.9 1284.0,338.9 1282.0,338.9 1282.0,338.7 1280.0,338.7 1280.0,338.2 1278.0,338.2 1278.0,338.3 1276.0,338.3 1276.0,338.0 1274.0,338.0 1274.0,337.6 1272.0,337.6 1272.0,337.9 1270.0,337.9 1270.0,337.0 1268.0,337.0 1268.0,337.0 1266.0,337.0 1266.0,337.0 1264.0,337.0 1264.0,336.0 1262.0,336.0 1262.0,335.7 1260.0,335.7 1260.0,335.5 1258.0,335.5 1258.0,335.0 1256.0,335.0 1256.0,334.9 1254.0,334.9 1254.0,334.3 1252.0,334.3 1252.0,334.2 1250.0,334.2 1250.0,334.2 1248.0,334.2 1248.0,333.5 1246.0,333.5 1246.0,333.3 1244.0,333.3 1244.0,332.7 1242.0,332.7 1242.0,332.7 1240.0,332.7 1240.0,332.1 1238.0,332.1 1238.0,332.6 1236.0,332.6 1236.0,331.7 1234.0,331.7 1234.0,331.8 1232.0,331.8 1232.0,330.8 1230.0,330.8 1230.0,330.7 1228.0,330.7 1228.0,330.4 1226.0,330.4 1226.0,330.3 1224.0,330.3 1224.0,329.7 1222.0,329.7 1222.0,329.4 1220.0,329.4 1220.0,329.0 1218.0,329.0 1218.0,328.4 1216.0,328.4 1216.0,328.1 1214.0,328.1 1212.0,328.7 1210.0,328.7 1208.0,328.7 1206.0,328.7 1204.0,328.6 1202.0,328.9 1200.0,328.7 1198.0,328.7 1196.0,328.5 1194.0,328.4 1192.0,328.5 1190.0,328.4 1188.0,328.8 1186.0,328.4 1184.0,328.7 1182.0,328.4 1180.0,328.4 1178.0,328.5 1176.0,328.5 1174.0,328.4 1172.0,328.5 1170.0,328.4 1168.0,328.3 1166.0,328.3 1164.0,328.2 1162.0,328.4 1160.0,328.5 1158.0,328.1 1156.0,328.4 1154.0,328.1 1152.0,328.2 1150.0,328.0 1148.0,328.5 1146.0,328.2 1144.0,328.2 1142.0,328.4 1140.0,328.0 1138.0,328.0 1136.0,328.0 1134.0,328.1 1132.0,327.7 1130.0,327.7 1128.0,327.8 1126.0,327.8 1124.0,327.7 1122.0,327.5 1120.0,327.4 1118.0,327.4 1116.0,327.8 1114.0,327.3 1112.0,327.4 1110.0,327.5 1108.0,327.4 1106.0,327.2 1104.0,327.4 1102.0,327.4 1100.0,327.4 1098.0,327.3 1096.0,326.9 1094.0,326.8 1092.0,327.0 1090.0,327.1 1088.0,326.9 1086.0,326.4 1084.0,326.5 1082.0,326.3 1080.0,325.8 1078.0,326.0 1076.0,325.5 1074.0,325.6 1072.0,325.0 1070.0,325.1 1068.0,324.7 1066.0,324.6 1064.0,324.2 1062.0,324.0 1060.0,324.1 1058.0,323.7 1056.0,323.6 1054.0,323.2 1052.0,323.1 1050.0,322.7 1048.0,322.9 1046.0,322.5 1044.0,322.2 1042.0,322.1 1040.0,322.0 1038.0,321.6 1036.0,321.4 1034.0,321.3 1032.0,320.5 1030.0,320.5 1028.0,320.1 1026.0,319.8 1024.0,319.1 1022.0,319.2 1020.0,318.5 1018.0,318.6 1016.0,317.8 1014.0,317.7 1012.0,317.4 1010.0,316.9 1008.0,316.6 1006.0,316.0 1004.0,315.4 1002.0,314.7 1000.0,313.9 998.0,313.4 996.0,312.8 994.0,311.9 992.0,311.5 990.0,310.8 988.0,310.3 986.0,309.6 984.0,308.9 982.0,308.4 980.0,307.4 978.0,306.3 976.0,305.1 974.0,304.0 972.0,303.2 970.0,302.1 968.0,300.7 966.0,299.4 964.0,298.5 962.0,297.2 960.0,295.6 958.0,294.4 956.0,293.4 954.0,292.5 952.0,291.9 950.0,291.2 948.0,290.1 946.0,289.7 944.0,288.3 942.0,286.5 940.0,285.4 938.0,285.1 936.0,285.3 934.0,285.1 932.0,285.2 930.0,285.1 928.0,285.1 926.0,285.0 924.0,285.1 922.0,285.4 920.0,285.4 918.0,285.2 916.0,285.5 914.0,285.3 912.0,285.1 910.0,285.3 908.0,285.1 906.0,285.0 904.0,285.4 902.0,285.1 900.0,285.3 898.0,285.3 896.0,285.4 894.0,285.1 892.0,285.1 890.0,285.2 888.0,285.5" fill="#f5a227"/>
<g font-family="Liberation Sans, sans-serif" fill="#333">
<rect x="881.5" y="544" width="1" height="259" fill="#e3e3e3"/>
<rect x="1038.2" y="544" width="1" height="259" fill="#e3e3e3"/>
<rect x="1195.0" y="544" width="1" height="259" fill="#e3e3e3"/>
<rect x="1351.8" y="544" width="1" height="259" fill="#e3e3e3"/>
<rect x="1508.5" y="544" width="1" height="259" fill="#e3e3e3"/>
<rect x="877" y="543.5" width="637" height="1" fill="#e3e3e3"/>
<rect x="877" y="607.0" width="637" height="1" fill="#e3e3e3"/>
<rect x="877" y="670.5" width="637" height="1" fill="#e3e3e3"/>
<rect x="877" y="734.0" width="637" height="1" fill="#e3e3e3"/>
<rect x="877" y="797.5" width="637" height="1" fill="#e3e3e3"/>
<rect x="877" y="797" width="637" height="2" fill="#dcdcdc"/>
<rect x="1508" y="544" width="2" height="259" fill="#dcdcdc"/>
<text x="876" y="548.5" font-size="12.5" text-anchor="end">15.2</text>
<text x="876" y="612.0" font-size="12.5" text-anchor="end">11.4</text>
<text x="876" y="675.5" font-size="12.5" text-anchor="end">7.6</text>
<text x="876" y="739.0" font-size="12.5" text-anchor="end">3.8</text>
<text x="876" y="802.5" font-size="12.5" text-anchor="end">0.0</text>
<text x="1513" y="548.5" font-size="12.5">168.0</text>
<text x="1513" y="612.0" font-size="12.5">127.1</text>
<text x="1513" y="675.5" font-size="12.5">86.2</text>
<text x="1513" y="739.0" font-size="12.5">45.3</text>
<text x="1513" y="802.5" font-size="12.5">4.4</text>
<text x="882.0" y="815.5" font-size="12.5" text-anchor="middle">0.0</text>
<text x="1038.75" y="815.5" font-size="12.5" text-anchor="middle">876.2</text>
<text x="1195.5" y="815.5" font-size="12.5" text-anchor="middle">1752.5</text>
<text x="1352.25" y="815.5" font-size="12.5" text-anchor="middle">2628.7</text>
<text x="1509.0" y="815.5" font-size="12.5" text-anchor="middle">3505.0</text>
<text x="1195" y="836" font-size="12.5" font-weight="bold" text-anchor="middle">Shaft Speed (rpm)</text>
<text transform="translate(845,672) rotate(-90)" font-size="12.5" font-weight="bold" text-anchor="middle">Power (kW)</text>
<text transform="translate(1564,671) rotate(-90)" font-size="12.5" font-weight="bold" text-anchor="middle">Torque (Nm)</text>
<rect x="1103.5" y="510.5" width="9" height="9" rx="1" fill="#1f9ddd" stroke="#000" stroke-width="1"/>
<text x="1117" y="519" font-size="13" fill="#3a3a3a">Power (kW)</text>
<rect x="1193.5" y="510.5" width="9" height="9" rx="1" fill="#98c855" stroke="#000" stroke-width="1"/>
<text x="1207" y="519" font-size="13" fill="#3a3a3a">Torque (Nm)</text>
</g>
<line x1="882.5" y1="798" x2="1039.5" y2="545" stroke="#1f9ddd" stroke-width="3"/>
<polygon points="1036.0,545.7 1038.0,544.3 1040.0,543.6 1042.0,543.9 1044.0,546.4 1046.0,549.9 1048.0,554.6 1050.0,559.6 1052.0,568.3 1054.0,573.2 1056.0,574.9 1058.0,577.7 1060.0,579.6 1062.0,582.9 1064.0,585.2 1066.0,588.1 1068.0,590.9 1070.0,593.5 1072.0,595.4 1074.0,598.6 1076.0,600.4 1078.0,603.7 1080.0,605.6 1082.0,606.9 1084.0,608.3 1086.0,610.9 1088.0,611.7 1090.0,611.7 1092.0,612.1 1094.0,613.4 1096.0,613.6 1098.0,614.5 1100.0,615.2 1102.0,615.9 1104.0,615.6 1106.0,616.7 1108.0,616.2 1110.0,617.2 1112.0,617.3 1114.0,616.6 1116.0,617.5 1118.0,617.6 1120.0,617.3 1122.0,617.8 1124.0,617.6 1126.0,618.0 1128.0,618.5 1130.0,617.9 1132.0,618.3 1134.0,618.7 1136.0,618.2 1138.0,619.2 1140.0,618.9 1142.0,618.9 1144.0,618.9 1146.0,619.4 1148.0,619.5 1150.0,619.5 1152.0,619.6 1154.0,619.1 1156.0,619.3 1158.0,619.7 1160.0,619.9 1162.0,620.1 1164.0,619.3 1166.0,619.9 1168.0,620.2 1170.0,619.5 1172.0,620.2 1174.0,620.2 1176.0,620.2 1178.0,620.4 1180.0,620.2 1182.0,620.1 1184.0,620.4 1186.0,620.9 1188.0,621.3 1190.0,620.8 1192.0,621.8 1194.0,621.4 1196.0,622.2 1198.0,622.1 1200.0,622.4 1202.0,622.3 1204.0,623.4 1206.0,623.9 1208.0,624.3 1210.0,624.3 1212.0,624.2 1214.0,624.7 1216.0,625.2 1218.0,625.9 1220.0,625.9 1222.0,626.4 1224.0,626.7 1226.0,626.8 1228.0,627.0 1230.0,628.0 1232.0,628.3 1234.0,627.7 1236.0,628.5 1238.0,628.9 1240.0,629.2 1242.0,629.6 1244.0,631.0 1246.0,631.4 1248.0,631.9 1250.0,631.7 1252.0,632.3 1254.0,633.0 1256.0,633.6 1258.0,634.0 1260.0,635.1 1262.0,635.3 1264.0,636.5 1266.0,636.2 1268.0,637.5 1270.0,637.3 1272.0,638.1 1274.0,638.6 1276.0,640.1 1278.0,640.7 1280.0,640.7 1282.0,642.2 1284.0,642.8 1286.0,643.0 1288.0,644.0 1290.0,644.7 1292.0,645.4 1294.0,645.9 1296.0,646.9 1298.0,648.2 1300.0,648.7 1302.0,649.8 1304.0,649.8 1306.0,651.5 1308.0,652.0 1310.0,653.0 1312.0,653.2 1314.0,653.2 1316.0,651.4 1318.0,647.6 1320.0,647.6 1320.0,647.6 1322.0,647.6 1322.0,649.7 1324.0,649.7 1324.0,649.3 1326.0,649.3 1326.0,647.0 1328.0,647.0 1328.0,647.7 1330.0,647.7 1330.0,646.4 1332.0,646.4 1332.0,639.6 1334.0,639.6 1334.0,639.5 1336.0,639.5 1336.0,640.5 1338.0,640.5 1338.0,636.2 1340.0,636.2 1340.0,637.8 1342.0,637.8 1342.0,639.4 1344.0,639.4 1344.0,639.5 1346.0,639.5 1346.0,639.7 1348.0,639.7 1348.0,636.3 1350.0,636.3 1350.0,638.2 1352.0,638.2 1352.0,635.2 1354.0,635.2 1354.0,637.4 1356.0,637.4 1356.0,636.0 1358.0,636.0 1358.0,636.3 1360.0,636.3 1360.0,635.1 1362.0,635.1 1362.0,635.0 1364.0,635.0 1364.0,631.4 1366.0,631.4 1366.0,630.6 1368.0,630.6 1368.0,633.3 1370.0,633.3 1370.0,630.6 1372.0,630.6 1372.0,633.2 1374.0,633.2 1374.0,633.2 1376.0,633.2 1376.0,628.4 1378.0,628.4 1378.0,630.4 1380.0,630.4 1380.0,630.4 1382.0,630.4 1382.0,630.3 1384.0,630.3 1384.0,628.9 1386.0,628.9 1386.0,626.6 1388.0,626.6 1388.0,629.1 1390.0,629.1 1390.0,626.1 1392.0,626.1 1392.0,628.7 1394.0,628.7 1394.0,626.5 1396.0,626.5 1396.0,625.8 1398.0,625.8 1398.0,625.7 1400.0,625.7 1400.0,625.6 1402.0,625.6 1402.0,620.7 1404.0,620.7 1404.0,624.3 1406.0,624.3 1406.0,624.3 1408.0,624.3 1408.0,624.0 1410.0,624.0 1410.0,620.2 1412.0,620.2 1412.0,624.2 1414.0,624.2 1414.0,624.0 1416.0,624.0 1416.0,623.0 1418.0,623.0 1418.0,619.9 1420.0,619.9 1420.0,620.9 1422.0,620.9 1422.0,619.9 1424.0,619.9 1424.0,621.9 1426.0,621.9 1426.0,621.4 1428.0,621.4 1428.0,622.5 1430.0,622.5 1430.0,620.5 1432.0,620.5 1432.0,620.1 1434.0,620.1 1434.0,621.7 1436.0,621.7 1436.0,620.2 1438.0,620.2 1438.0,619.8 1440.0,619.8 1440.0,619.2 1442.0,619.2 1442.0,619.6 1444.0,619.6 1444.0,617.8 1446.0,617.8 1446.0,619.2 1448.0,619.2 1448.0,614.1 1450.0,614.1 1450.0,616.3 1452.0,616.3 1452.0,614.8 1454.0,614.8 1454.0,616.3 1456.0,616.3 1456.0,616.6 1458.0,616.6 1458.0,614.6 1460.0,614.6 1460.0,614.2 1462.0,614.2 1462.0,613.4 1464.0,613.4 1464.0,610.0 1466.0,610.0 1466.0,608.2 1468.0,608.2 1468.0,612.8 1470.0,612.8 1470.0,612.6 1472.0,612.6 1472.0,611.2 1474.0,611.2 1474.0,610.2 1476.0,610.2 1476.0,607.0 1478.0,607.0 1478.0,611.0 1480.0,611.0 1480.0,605.5 1482.0,605.5 1482.0,609.5 1484.0,609.5 1484.0,610.0 1486.0,610.0 1486.0,609.5 1488.0,609.5 1488.0,607.7 1490.0,607.7 1490.0,608.3 1492.0,608.3 1492.0,606.9 1494.0,606.9 1494.0,602.2 1496.0,602.2 1496.0,608.1 1498.0,608.1 1498.0,607.1 1500.0,607.1 1500.0,604.9 1502.0,604.9 1502.0,607.9 1504.0,607.9 1504.0,607.2 1506.0,607.2 1506.0,604.2 1508.0,604.2 1508.0,608.7 1509.0,608.7 1509.0,608.8 1509.0,608.8 1509.0,630.2 1509.0,630.2 1509.0,628.3 1508.0,628.3 1508.0,627.8 1506.0,627.8 1506.0,628.2 1504.0,628.2 1504.0,629.4 1502.0,629.4 1502.0,630.3 1500.0,630.3 1500.0,629.5 1498.0,629.5 1498.0,631.1 1496.0,631.1 1496.0,630.9 1494.0,630.9 1494.0,630.4 1492.0,630.4 1492.0,631.5 1490.0,631.5 1490.0,631.4 1488.0,631.4 1488.0,632.0 1486.0,632.0 1486.0,632.6 1484.0,632.6 1484.0,632.0 1482.0,632.0 1482.0,635.2 1480.0,635.2 1480.0,633.3 1478.0,633.3 1478.0,634.7 1476.0,634.7 1476.0,634.3 1474.0,634.3 1474.0,634.9 1472.0,634.9 1472.0,634.9 1470.0,634.9 1470.0,637.3 1468.0,637.3 1468.0,635.5 1466.0,635.5 1466.0,636.3 1464.0,636.3 1464.0,637.0 1462.0,637.0 1462.0,638.3 1460.0,638.3 1460.0,637.7 1458.0,637.7 1458.0,637.8 1456.0,637.8 1456.0,638.3 1454.0,638.3 1454.0,639.4 1452.0,639.4 1452.0,641.2 1450.0,641.2 1450.0,640.2 1448.0,640.2 1448.0,640.3 1446.0,640.3 1446.0,640.6 1444.0,640.6 1444.0,642.8 1442.0,642.8 1442.0,641.7 1440.0,641.7 1440.0,642.4 1438.0,642.4 1438.0,642.3 1436.0,642.3 1436.0,643.4 1434.0,643.4 1434.0,644.3 1432.0,644.3 1432.0,644.4 1430.0,644.4 1430.0,644.3 1428.0,644.3 1428.0,645.1 1426.0,645.1 1426.0,648.1 1424.0,648.1 1424.0,646.5 1422.0,646.5 1422.0,646.5 1420.0,646.5 1420.0,647.3 1418.0,647.3 1418.0,647.7 1416.0,647.7 1416.0,647.8 1414.0,647.8 1414.0,648.9 1412.0,648.9 1412.0,649.7 1410.0,649.7 1410.0,649.3 1408.0,649.3 1408.0,649.8 1406.0,649.8 1406.0,651.1 1404.0,651.1 1404.0,652.6 1402.0,652.6 1402.0,651.9 1400.0,651.9 1400.0,652.1 1398.0,652.1 1398.0,652.9 1396.0,652.9 1396.0,653.1 1394.0,653.1 1394.0,655.5 1392.0,655.5 1392.0,656.8 1390.0,656.8 1390.0,655.1 1388.0,655.1 1388.0,656.1 1386.0,656.1 1386.0,656.9 1384.0,656.9 1384.0,657.2 1382.0,657.2 1382.0,659.2 1380.0,659.2 1380.0,660.0 1378.0,660.0 1378.0,658.5 1376.0,658.5 1376.0,659.6 1374.0,659.6 1374.0,662.2 1372.0,662.2 1372.0,661.1 1370.0,661.1 1370.0,661.7 1368.0,661.7 1368.0,664.0 1366.0,664.0 1366.0,663.0 1364.0,663.0 1364.0,663.6 1362.0,663.6 1362.0,663.3 1360.0,663.3 1360.0,664.4 1358.0,664.4 1358.0,665.1 1356.0,665.1 1356.0,665.4 1354.0,665.4 1354.0,666.0 1352.0,666.0 1352.0,666.5 1350.0,666.5 1350.0,666.5 1348.0,666.5 1348.0,667.3 1346.0,667.3 1346.0,667.9 1344.0,667.9 1344.0,668.1 1342.0,668.1 1342.0,669.2 1340.0,669.2 1340.0,669.3 1338.0,669.3 1338.0,669.7 1336.0,669.7 1336.0,670.6 1334.0,670.6 1334.0,671.2 1332.0,671.2 1332.0,671.9 1330.0,671.9 1330.0,672.0 1328.0,672.0 1328.0,672.7 1326.0,672.7 1326.0,674.1 1324.0,674.1 1324.0,674.3 1322.0,674.3 1322.0,675.2 1320.0,675.2 1320.0,675.1 1318.0,675.1 1316.0,678.2 1314.0,677.5 1312.0,677.1 1310.0,676.5 1308.0,675.5 1306.0,674.8 1304.0,674.5 1302.0,673.4 1300.0,672.2 1298.0,671.8 1296.0,670.9 1294.0,670.3 1292.0,669.8 1290.0,668.5 1288.0,667.6 1286.0,666.9 1284.0,665.8 1282.0,664.5 1280.0,663.6 1278.0,663.0 1276.0,661.3 1274.0,660.3 1272.0,660.1 1270.0,658.7 1268.0,658.5 1266.0,657.3 1264.0,657.1 1262.0,655.9 1260.0,654.7 1258.0,653.8 1256.0,653.2 1254.0,652.4 1252.0,652.0 1250.0,651.6 1248.0,650.7 1246.0,650.7 1244.0,649.8 1242.0,649.4 1240.0,648.4 1238.0,647.7 1236.0,647.3 1234.0,646.5 1232.0,645.8 1230.0,645.2 1228.0,645.2 1226.0,644.4 1224.0,643.9 1222.0,643.0 1220.0,642.2 1218.0,642.2 1216.0,641.5 1214.0,641.3 1212.0,640.5 1210.0,639.5 1208.0,639.0 1206.0,639.0 1204.0,638.7 1202.0,638.0 1200.0,637.8 1198.0,637.5 1196.0,636.9 1194.0,636.7 1192.0,636.7 1190.0,636.8 1188.0,636.1 1186.0,636.1 1184.0,636.7 1182.0,635.8 1180.0,635.9 1178.0,635.8 1176.0,635.9 1174.0,636.2 1172.0,636.0 1170.0,635.2 1168.0,635.7 1166.0,635.1 1164.0,635.1 1162.0,635.5 1160.0,635.0 1158.0,635.3 1156.0,635.5 1154.0,635.5 1152.0,635.1 1150.0,635.3 1148.0,635.1 1146.0,635.3 1144.0,635.7 1142.0,635.3 1140.0,635.3 1138.0,635.4 1136.0,635.3 1134.0,634.9 1132.0,635.1 1130.0,635.2 1128.0,634.9 1126.0,634.8 1124.0,635.4 1122.0,635.2 1120.0,635.6 1118.0,635.2 1116.0,635.6 1114.0,636.1 1112.0,635.8 1110.0,635.9 1108.0,636.3 1106.0,636.3 1104.0,636.3 1102.0,636.7 1100.0,636.5 1098.0,636.9 1096.0,636.6 1094.0,636.3 1092.0,637.1 1090.0,636.9 1088.0,636.5 1086.0,637.4 1084.0,636.8 1082.0,636.3 1080.0,636.6 1078.0,636.7 1076.0,636.6 1074.0,635.8 1072.0,634.7 1070.0,631.5 1068.0,629.6 1066.0,624.6 1064.0,620.1 1062.0,614.8 1060.0,609.6 1058.0,605.0 1056.0,600.4 1054.0,596.2 1052.0,590.6 1050.0,582.2 1048.0,573.1 1046.0,563.7 1044.0,557.1 1042.0,552.3 1040.0,547.7 1038.0,548.8 1036.0,549.6" fill="#1f9ddd"/>
<rect x="881.3" y="544" width="1.6" height="254" fill="#98c855"/>
<polygon points="882.0,542.8 884.0,544.1 886.0,545.6 888.0,547.2 890.0,548.1 892.0,548.2 894.0,548.5 896.0,548.4 898.0,547.8 900.0,547.5 902.0,547.1 904.0,547.4 906.0,547.6 908.0,547.2 910.0,547.6 912.0,547.4 914.0,547.4 916.0,547.8 918.0,547.7 920.0,547.9 922.0,547.6 924.0,547.8 926.0,547.3 928.0,547.6 930.0,547.8 932.0,547.2 934.0,547.9 936.0,547.8 938.0,547.4 940.0,547.8 942.0,547.8 944.0,547.4 946.0,547.2 948.0,547.7 950.0,547.7 952.0,547.8 954.0,547.3 956.0,547.4 958.0,547.1 960.0,547.2 962.0,547.5 964.0,547.2 966.0,547.0 968.0,547.4 970.0,547.0 972.0,547.1 974.0,547.5 976.0,547.7 978.0,547.0 980.0,547.6 982.0,547.7 984.0,547.6 986.0,547.0 988.0,547.0 990.0,547.3 992.0,547.0 994.0,547.3 996.0,547.3 998.0,547.6 1000.0,547.3 1002.0,547.0 1004.0,546.9 1006.0,547.5 1008.0,546.9 1010.0,547.1 1012.0,547.6 1014.0,547.2 1016.0,546.8 1018.0,547.4 1020.0,547.1 1022.0,546.8 1024.0,547.4 1026.0,547.5 1028.0,546.8 1030.0,547.5 1032.0,547.3 1034.0,546.8 1036.0,547.3 1038.0,547.3 1040.0,548.6 1042.0,550.3 1044.0,556.4 1046.0,562.1 1048.0,567.9 1050.0,576.1 1052.0,585.2 1054.0,595.1 1056.0,601.9 1058.0,607.3 1060.0,612.3 1062.0,616.3 1064.0,620.5 1066.0,624.5 1068.0,628.8 1070.0,632.7 1072.0,636.8 1074.0,640.7 1076.0,644.8 1078.0,648.1 1080.0,651.6 1082.0,653.9 1084.0,656.3 1086.0,658.8 1088.0,661.5 1090.0,663.3 1092.0,666.2 1094.0,668.1 1096.0,669.7 1098.0,671.2 1100.0,672.4 1102.0,673.9 1104.0,675.0 1106.0,676.3 1108.0,677.6 1110.0,678.8 1112.0,680.1 1114.0,681.5 1116.0,682.4 1118.0,683.6 1120.0,684.7 1122.0,686.2 1124.0,687.1 1126.0,688.7 1128.0,689.1 1130.0,690.0 1132.0,691.4 1134.0,692.6 1136.0,692.9 1138.0,693.8 1140.0,694.7 1142.0,695.7 1144.0,696.6 1146.0,697.9 1148.0,698.3 1150.0,699.0 1152.0,700.6 1154.0,701.3 1156.0,701.5 1158.0,702.4 1160.0,703.2 1162.0,704.3 1164.0,705.1 1166.0,705.0 1168.0,706.0 1170.0,707.0 1172.0,707.5 1174.0,708.5 1176.0,708.9 1178.0,709.4 1180.0,710.4 1182.0,710.9 1184.0,711.6 1186.0,712.7 1188.0,713.1 1190.0,714.0 1192.0,714.5 1194.0,715.0 1196.0,715.7 1198.0,716.2 1200.0,717.3 1202.0,717.7 1204.0,718.6 1206.0,719.1 1208.0,719.9 1210.0,720.5 1212.0,721.0 1214.0,721.6 1216.0,722.3 1218.0,722.6 1220.0,723.9 1222.0,724.5 1224.0,724.4 1226.0,725.6 1228.0,725.7 1230.0,726.7 1232.0,727.2 1234.0,727.5 1236.0,727.5 1238.0,728.1 1240.0,728.6 1242.0,729.7 1244.0,730.0 1246.0,730.2 1248.0,731.3 1250.0,731.4 1252.0,732.1 1254.0,732.9 1256.0,733.2 1258.0,734.0 1260.0,734.2 1262.0,734.6 1264.0,735.3 1266.0,736.4 1268.0,737.5 1270.0,738.2 1272.0,738.9 1274.0,739.4 1276.0,739.6 1278.0,740.7 1280.0,740.6 1282.0,741.6 1284.0,742.0 1286.0,742.5 1288.0,743.1 1290.0,744.3 1292.0,744.8 1294.0,745.3 1296.0,745.8 1298.0,746.0 1300.0,746.7 1302.0,747.6 1304.0,748.0 1306.0,748.6 1308.0,749.3 1310.0,750.0 1312.0,750.9 1314.0,752.4 1316.0,752.4 1316.0,752.0 1318.0,752.0 1318.0,751.6 1320.0,751.6 1320.0,750.3 1322.0,750.3 1322.0,751.0 1324.0,751.0 1324.0,751.0 1326.0,751.0 1326.0,749.0 1328.0,749.0 1328.0,748.9 1330.0,748.9 1330.0,750.1 1332.0,750.1 1332.0,749.7 1334.0,749.7 1334.0,749.3 1336.0,749.3 1336.0,747.9 1338.0,747.9 1338.0,749.0 1340.0,749.0 1340.0,749.2 1342.0,749.2 1342.0,749.1 1344.0,749.1 1344.0,748.7 1346.0,748.7 1346.0,749.5 1348.0,749.5 1348.0,748.7 1350.0,748.7 1350.0,749.8 1352.0,749.8 1352.0,749.6 1354.0,749.6 1354.0,749.6 1356.0,749.6 1356.0,750.1 1358.0,750.1 1358.0,750.1 1360.0,750.1 1360.0,750.2 1362.0,750.2 1362.0,750.0 1364.0,750.0 1364.0,749.0 1366.0,749.0 1366.0,750.4 1368.0,750.4 1368.0,749.6 1370.0,749.6 1370.0,750.5 1372.0,750.5 1372.0,750.0 1374.0,750.0 1374.0,750.8 1376.0,750.8 1376.0,751.0 1378.0,751.0 1378.0,751.1 1380.0,751.1 1380.0,751.5 1382.0,751.5 1382.0,750.1 1384.0,750.1 1384.0,751.6 1386.0,751.6 1386.0,751.5 1388.0,751.5 1388.0,751.0 1390.0,751.0 1390.0,751.5 1392.0,751.5 1392.0,751.6 1394.0,751.6 1394.0,750.5 1396.0,750.5 1396.0,752.3 1398.0,752.3 1398.0,752.3 1400.0,752.3 1400.0,751.0 1402.0,751.0 1402.0,752.1 1404.0,752.1 1404.0,752.2 1406.0,752.2 1406.0,752.8 1408.0,752.8 1408.0,753.0 1410.0,753.0 1410.0,752.8 1412.0,752.8 1412.0,751.7 1414.0,751.7 1414.0,752.7 1416.0,752.7 1416.0,752.8 1418.0,752.8 1418.0,753.0 1420.0,753.0 1420.0,753.1 1422.0,753.1 1422.0,753.6 1424.0,753.6 1424.0,753.6 1426.0,753.6 1426.0,752.5 1428.0,752.5 1428.0,752.4 1430.0,752.4 1430.0,753.9 1432.0,753.9 1432.0,753.9 1434.0,753.9 1434.0,753.7 1436.0,753.7 1436.0,754.2 1438.0,754.2 1438.0,753.8 1440.0,753.8 1440.0,754.2 1442.0,754.2 1442.0,754.2 1444.0,754.2 1444.0,753.1 1446.0,753.1 1446.0,754.4 1448.0,754.4 1448.0,753.9 1450.0,753.9 1450.0,754.5 1452.0,754.5 1452.0,754.9 1454.0,754.9 1454.0,754.6 1456.0,754.6 1456.0,753.7 1458.0,753.7 1458.0,754.0 1460.0,754.0 1460.0,754.6 1462.0,754.6 1462.0,754.6 1464.0,754.6 1464.0,755.3 1466.0,755.3 1466.0,754.9 1468.0,754.9 1468.0,755.4 1470.0,755.4 1470.0,755.2 1472.0,755.2 1472.0,754.5 1474.0,754.5 1474.0,754.2 1476.0,754.2 1476.0,753.9 1478.0,753.9 1478.0,755.6 1480.0,755.6 1480.0,754.9 1482.0,754.9 1482.0,755.3 1484.0,755.3 1484.0,755.5 1486.0,755.5 1486.0,755.8 1488.0,755.8 1488.0,755.7 1490.0,755.7 1490.0,754.5 1492.0,754.5 1492.0,754.9 1494.0,754.9 1494.0,755.0 1496.0,755.0 1496.0,755.3 1498.0,755.3 1498.0,756.2 1500.0,756.2 1500.0,755.2 1502.0,755.2 1502.0,754.9 1504.0,754.9 1504.0,754.9 1506.0,754.9 1506.0,756.5 1508.0,756.5 1508.0,756.2 1509.0,756.2 1509.0,756.4 1509.0,756.4 1509.0,762.7 1509.0,762.7 1509.0,762.7 1508.0,762.7 1508.0,762.6 1506.0,762.6 1506.0,762.6 1504.0,762.6 1504.0,762.3 1502.0,762.3 1502.0,762.2 1500.0,762.2 1500.0,762.1 1498.0,762.1 1498.0,762.3 1496.0,762.3 1496.0,762.2 1494.0,762.2 1494.0,762.0 1492.0,762.0 1492.0,762.1 1490.0,762.1 1490.0,762.6 1488.0,762.6 1488.0,762.6 1486.0,762.6 1486.0,762.0 1484.0,762.0 1484.0,761.8 1482.0,761.8 1482.0,761.8 1480.0,761.8 1480.0,761.6 1478.0,761.6 1478.0,762.2 1476.0,762.2 1476.0,761.6 1474.0,761.6 1474.0,761.5 1472.0,761.5 1472.0,761.4 1470.0,761.4 1470.0,761.5 1468.0,761.5 1468.0,761.4 1466.0,761.4 1466.0,761.2 1464.0,761.2 1464.0,761.2 1462.0,761.2 1462.0,761.3 1460.0,761.3 1460.0,761.0 1458.0,761.0 1458.0,761.1 1456.0,761.1 1456.0,761.0 1454.0,761.0 1454.0,761.0 1452.0,761.0 1452.0,760.9 1450.0,760.9 1450.0,761.5 1448.0,761.5 1448.0,760.7 1446.0,760.7 1446.0,760.6 1444.0,760.6 1444.0,761.1 1442.0,761.1 1442.0,761.2 1440.0,761.2 1440.0,760.6 1438.0,760.6 1438.0,761.2 1436.0,761.2 1436.0,760.9 1434.0,760.9 1434.0,761.1 1432.0,761.1 1432.0,760.4 1430.0,760.4 1430.0,760.7 1428.0,760.7 1428.0,760.2 1426.0,760.2 1426.0,760.1 1424.0,760.1 1424.0,760.5 1422.0,760.5 1422.0,760.2 1420.0,760.2 1420.0,760.0 1418.0,760.0 1418.0,760.0 1416.0,760.0 1416.0,759.9 1414.0,759.9 1414.0,760.5 1412.0,760.5 1412.0,759.9 1410.0,759.9 1410.0,759.7 1408.0,759.7 1408.0,759.7 1406.0,759.7 1406.0,759.7 1404.0,759.7 1404.0,759.8 1402.0,759.8 1402.0,759.7 1400.0,759.7 1400.0,760.1 1398.0,760.1 1398.0,759.6 1396.0,759.6 1396.0,759.5 1394.0,759.5 1394.0,759.7 1392.0,759.7 1392.0,759.7 1390.0,759.7 1390.0,759.7 1388.0,759.7 1388.0,760.0 1386.0,760.0 1386.0,759.6 1384.0,759.6 1384.0,759.7 1382.0,759.7 1382.0,759.6 1380.0,759.6 1380.0,759.8 1378.0,759.8 1378.0,759.5 1376.0,759.5 1376.0,759.8 1374.0,759.8 1374.0,760.2 1372.0,760.2 1372.0,759.7 1370.0,759.7 1370.0,760.1 1368.0,760.1 1368.0,759.7 1366.0,759.7 1366.0,760.0 1364.0,760.0 1364.0,759.5 1362.0,759.5 1362.0,759.5 1360.0,759.5 1360.0,759.5 1358.0,759.5 1358.0,759.6 1356.0,759.6 1356.0,759.6 1354.0,759.6 1354.0,759.7 1352.0,759.7 1352.0,759.6 1350.0,759.6 1350.0,759.7 1348.0,759.7 1348.0,759.6 1346.0,759.6 1346.0,759.5 1344.0,759.5 1344.0,759.6 1342.0,759.6 1342.0,759.8 1340.0,759.8 1340.0,759.6 1338.0,759.6 1338.0,759.6 1336.0,759.6 1336.0,760.0 1334.0,760.0 1334.0,759.9 1332.0,759.9 1332.0,760.5 1330.0,760.5 1330.0,759.8 1328.0,759.8 1328.0,760.0 1326.0,760.0 1326.0,760.5 1324.0,760.5 1324.0,760.1 1322.0,760.1 1322.0,760.3 1320.0,760.3 1320.0,760.5 1318.0,760.5 1318.0,760.5 1316.0,760.5 1316.0,760.5 1314.0,760.5 1312.0,760.8 1310.0,760.4 1308.0,759.5 1306.0,758.8 1304.0,758.7 1302.0,757.5 1300.0,757.2 1298.0,756.5 1296.0,756.2 1294.0,755.7 1292.0,754.8 1290.0,754.1 1288.0,753.2 1286.0,752.7 1284.0,752.6 1282.0,751.8 1280.0,751.2 1278.0,750.7 1276.0,749.9 1274.0,749.1 1272.0,748.7 1270.0,747.7 1268.0,747.6 1266.0,746.6 1264.0,746.3 1262.0,745.6 1260.0,745.3 1258.0,744.7 1256.0,744.1 1254.0,743.1 1252.0,742.5 1250.0,742.1 1248.0,741.7 1246.0,741.1 1244.0,740.2 1242.0,739.9 1240.0,739.5 1238.0,738.9 1236.0,738.4 1234.0,737.7 1232.0,736.8 1230.0,736.3 1228.0,736.3 1226.0,735.2 1224.0,734.7 1222.0,733.9 1220.0,734.1 1218.0,733.2 1216.0,732.4 1214.0,731.6 1212.0,730.8 1210.0,730.5 1208.0,729.8 1206.0,729.0 1204.0,728.3 1202.0,727.3 1200.0,727.1 1198.0,726.3 1196.0,725.3 1194.0,724.5 1192.0,723.8 1190.0,722.9 1188.0,722.1 1186.0,721.6 1184.0,721.0 1182.0,719.7 1180.0,719.5 1178.0,718.6 1176.0,717.9 1174.0,717.3 1172.0,717.0 1170.0,716.0 1168.0,715.5 1166.0,714.9 1164.0,714.7 1162.0,714.0 1160.0,713.5 1158.0,712.2 1156.0,711.7 1154.0,711.0 1152.0,710.6 1150.0,709.8 1148.0,709.0 1146.0,708.5 1144.0,707.7 1142.0,706.9 1140.0,706.2 1138.0,705.3 1136.0,704.7 1134.0,703.9 1132.0,702.8 1130.0,702.4 1128.0,701.6 1126.0,701.2 1124.0,700.1 1122.0,699.0 1120.0,698.1 1118.0,697.4 1116.0,696.9 1114.0,695.9 1112.0,695.0 1110.0,693.8 1108.0,693.1 1106.0,692.3 1104.0,691.1 1102.0,690.2 1100.0,689.5 1098.0,688.2 1096.0,687.4 1094.0,685.9 1092.0,684.7 1090.0,683.8 1088.0,682.1 1086.0,680.7 1084.0,679.7 1082.0,678.4 1080.0,677.1 1078.0,675.2 1076.0,672.7 1074.0,670.5 1072.0,668.9 1070.0,666.2 1068.0,663.0 1066.0,659.2 1064.0,655.4 1062.0,651.5 1060.0,647.4 1058.0,643.7 1056.0,640.7 1054.0,637.1 1052.0,631.7 1050.0,623.2 1048.0,607.4 1046.0,590.6 1044.0,576.0 1042.0,563.6 1040.0,554.8 1038.0,552.1 1036.0,552.0 1034.0,552.1 1032.0,552.0 1030.0,552.0 1028.0,551.6 1026.0,552.1 1024.0,551.5 1022.0,551.7 1020.0,551.8 1018.0,551.5 1016.0,552.0 1014.0,552.2 1012.0,551.7 1010.0,552.0 1008.0,552.0 1006.0,551.7 1004.0,551.9 1002.0,552.0 1000.0,551.6 998.0,551.6 996.0,551.6 994.0,551.6 992.0,552.0 990.0,551.5 988.0,551.9 986.0,552.1 984.0,551.8 982.0,551.9 980.0,552.0 978.0,551.9 976.0,552.0 974.0,552.0 972.0,552.2 970.0,552.1 968.0,552.2 966.0,551.7 964.0,551.9 962.0,551.5 960.0,551.7 958.0,552.2 956.0,552.2 954.0,552.1 952.0,552.2 950.0,551.9 948.0,551.7 946.0,552.2 944.0,552.0 942.0,551.6 940.0,552.0 938.0,551.9 936.0,552.1 934.0,551.6 932.0,551.7 930.0,552.1 928.0,552.3 926.0,552.2 924.0,552.2 922.0,551.5 920.0,552.1 918.0,551.9 916.0,551.9 914.0,551.7 912.0,552.3 910.0,551.9 908.0,551.5 906.0,551.8 904.0,552.2 902.0,552.1 900.0,551.5 898.0,551.8 896.0,552.4 894.0,552.3 892.0,552.5 890.0,552.9 888.0,551.8 886.0,551.7 884.0,549.8 882.0,549.2" fill="#98c855"/>
</svg>
</div>
<div class="ab" style="left:0;top:869px;width:1600px;height:3px;background:linear-gradient(#e8e7e6,#9a9a9a)"></div>
<div class="ab" style="left:0;top:872px;width:1600px;height:28px;background:linear-gradient(#383838,#2f2f2f)"></div>
<svg class="ab" style="left:780px;top:860px" width="21" height="12"><polygon points="20,2 20,12 9,12" fill="#3a3a3a"/></svg>
<svg class="ab" style="left:0;top:872px" width="1600" height="28" viewBox="0 872 1600 28"><defs><linearGradient id="actg" x1="0" y1="0" x2="0" y2="1"><stop offset="0" stop-color="#4d4d4d"/><stop offset="1" stop-color="#3c3c3c"/></linearGradient></defs><g fill="#16a085"><rect x="6.5" y="875.3" width="13.5" height="7.2"/><rect x="6.5" y="875.3" width="6.5" height="21.5"/><rect x="14" y="883.5" width="6" height="13.3"/><rect x="21" y="875.3" width="6.5" height="21.5"/></g><rect x="80" y="877" width="2" height="18" fill="#a8a8a8"/><rect x="166" y="877" width="2" height="18" fill="#a8a8a8"/><rect x="1283" y="877" width="2" height="18" fill="#a8a8a8"/><rect x="1413" y="877" width="2" height="18" fill="#a8a8a8"/><rect x="95" y="882" width="6" height="6" fill="#dcdcdc"/><rect x="103" y="882" width="6" height="6" fill="#dcdcdc"/><rect x="112" y="882" width="6" height="6" fill="#dcdcdc"/><rect x="133" y="877" width="20" height="18" fill="#17a086"/><rect x="133" y="877" width="20" height="2" fill="#0b3d33"/><rect x="138" y="893" width="10" height="2" fill="#0b3d33"/><path d="M176.5 900 V877 Q176.5 872.8 172.5 872.5 M304.5 900 V877 Q304.5 872.8 308.5 872.5" fill="none" stroke="#4a4a4a" stroke-width="1"/><path d="M307.5 900 V877 Q307.5 872.8 303.5 872.5 M335.5 900 V877 Q335.5 872.8 339.5 872.5" fill="none" stroke="#4a4a4a" stroke-width="1"/><path d="M371.5 900 V877 Q371.5 872.8 367.5 872.5 M499.5 900 V877 Q499.5 872.8 503.5 872.5" fill="none" stroke="#4a4a4a" stroke-width="1"/><path d="M502.5 900 V877 Q502.5 872.8 498.5 872.5 M630.5 900 V877 Q630.5 872.8 634.5 872.5" fill="none" stroke="#4a4a4a" stroke-width="1"/><path d="M633.5 900 V877 Q633.5 872.8 629.5 872.5 M760.5 900 V877 Q760.5 872.8 764.5 872.5" fill="none" stroke="#4a4a4a" stroke-width="1"/><path d="M764.5 900 V877 Q764.5 872.8 760.5 872.5 M891.5 900 V877 Q891.5 872.8 895.5 872.5" fill="none" stroke="#4a4a4a" stroke-width="1"/><path d="M895.5 900 V877 Q895.5 872.8 891.5 872.5 M1022.5 900 V877 Q1022.5 872.8 1026.5 872.5" fill="none" stroke="#4a4a4a" stroke-width="1"/><rect x="1025" y="872" width="128" height="28" fill="url(#actg)"/><path d="M1025.5 900 V877 Q1025.5 872.8 1021.5 872.5 M1152.5 900 V877 Q1152.5 872.8 1156.5 872.5" fill="none" stroke="#4a4a4a" stroke-width="1"/><rect x="187" y="876" width="14" height="2" fill="#3b83d6"/><rect x="186" y="877.5" width="16" height="2" fill="#56b04a"/><rect x="185" y="879" width="18" height="2" fill="#f2c02b"/><rect x="184" y="881" width="20" height="15" rx="1.5" fill="#8c8c8c"/><rect x="190" y="887" width="8" height="2" fill="#eee"/><rect x="312" y="877" width="20" height="18" rx="1.5" fill="#444"/><path d="M315 880 L319 883 L315 886" stroke="#eee" stroke-width="1.6" fill="none"/><rect x="320" y="885" width="6" height="2" fill="#eee"/><circle cx="353.5" cy="886" r="10" fill="#ff7139"/><path d="M347.5 878 Q355.5 872 359.5 876 Q364.5 882 362.5 889 L356.5 883 Z" fill="#ffbd2e"/><circle cx="354.5" cy="886.5" r="5.5" fill="#7542e5"/><path d="M344.5 885 Q349.5 882 354.5 883 L349.5 887 Z" fill="#ff9a3d"/><path d="M343.5 888 Q348.5 897 358.5 895 Q351.5 894 343.5 888" fill="#e22850"/><circle cx="519.5" cy="886" r="10" fill="#ff7139"/><path d="M513.5 878 Q521.5 872 525.5 876 Q530.5 882 528.5 889 L522.5 883 Z" fill="#ffbd2e"/><circle cx="520.5" cy="886.5" r="5.5" fill="#7542e5"/><path d="M510.5 885 Q515.5 882 520.5 883 L515.5 887 Z" fill="#ff9a3d"/><path d="M509.5 888 Q514.5 897 524.5 895 Q517.5 894 509.5 888" fill="#e22850"/><circle cx="389" cy="886" r="10" fill="#1f76d2"/><path d="M379 884 L389 880 L398 885 L396 893 L382 893 Z" fill="#e8e8ea"/><path d="M382 886 L389 889 L396 886" stroke="#9aa" stroke-width="1" fill="none"/><path d="M381 878 Q387 874 395 877 Q390 877 386 880 Z" fill="#4aa3f0"/><rect x="643" y="876" width="15" height="18" fill="#4a1c3a"/><rect x="645" y="879" width="10" height="1.2" fill="#c8b0c0"/><rect x="645" y="882" width="10" height="1.2" fill="#c8b0c0"/><rect x="645" y="885" width="8" height="1.2" fill="#c8b0c0"/><circle cx="656" cy="891" r="6" fill="#e5952e"/><rect x="653" y="889.2" width="6" height="1.2" fill="#fff"/><rect x="653" y="892" width="6" height="1.2" fill="#fff"/><rect x="772" y="876" width="10" height="10" fill="#e44a48"/><rect x="782" y="876" width="10" height="10" fill="#33a853"/><rect x="772" y="886" width="10" height="10" fill="#f2ad3a"/><rect x="782" y="886" width="10" height="10" fill="#3478f0"/><path d="M905 876 H921 V896 H911 L905 890 Z" fill="#e8e8e8"/><path d="M905 890 L911 890 L911 896 Z" fill="#bbb"/><path d="M912 889 L922 876 L925 878.5 L915 891 L911.5 892 Z" fill="#f3b72d"/><g transform="translate(1042,886)"><circle r="7.5" fill="#3e5766"/><rect x="-2" y="-10" width="4" height="4" fill="#3e5766" transform="rotate(0)"/><rect x="-2" y="-10" width="4" height="4" fill="#3e5766" transform="rotate(45)"/><rect x="-2" y="-10" width="4" height="4" fill="#3e5766" transform="rotate(90)"/><rect x="-2" y="-10" width="4" height="4" fill="#3e5766" transform="rotate(135)"/><rect x="-2" y="-10" width="4" height="4" fill="#3e5766" transform="rotate(180)"/><rect x="-2" y="-10" width="4" height="4" fill="#3e5766" transform="rotate(225)"/><rect x="-2" y="-10" width="4" height="4" fill="#3e5766" transform="rotate(270)"/><rect x="-2" y="-10" width="4" height="4" fill="#3e5766" transform="rotate(315)"/><circle r="3" cx="-1" cy="1" fill="#eee"/></g><circle cx="1036" cy="880" r="6" fill="#555" opacity="0.8"/><text x="1032" y="885" font-family="Liberation Sans, sans-serif" font-size="12" fill="#eee">3</text><path d="M1164 893 L1166 889 L1166 884 Q1167 880 1171 879 Q1175 880 1176 884 L1176 889 L1178 893 Z" fill="#bdbdbd"/><circle cx="1175" cy="880" r="3.5" fill="#ddd"/><rect x="1169" y="894" width="4" height="2" fill="#bdbdbd"/><rect x="1195.5" y="875.5" width="39" height="21" fill="#fff" stroke="#aaa"/><rect x="1215" y="876" width="19" height="10" fill="#8c8c8c"/><rect x="1215" y="886.5" width="19" height="10" fill="#8c8c8c"/><rect x="1238.5" y="875.5" width="38" height="21" fill="#3c3c3c" stroke="#4a4a4a"/><path d="M1299 880 L1307 889 L1303 893 L1303 877 L1307 881 L1299 890" stroke="#e6e6e6" stroke-width="1.8" fill="none"/><path d="M1333.5 877 L1342 880 Q1342 891 1333.5 896 Q1325 891 1325 880 Z" fill="#e6e6e6"/><path d="M1329 886 L1332.5 889.5 L1338 883" stroke="#333" stroke-width="2" fill="none"/><path d="M1355 880 Q1364 873 1373 880 L1364 893 Z" fill="#6a6a6a"/><rect x="1366" y="889" width="7" height="6" fill="#e6e6e6"/><path d="M1367.5 889 V887 Q1369.5 884 1371.5 887 V889" stroke="#e6e6e6" fill="none"/><rect x="1390" y="876" width="14" height="14" fill="#ddd"/><rect x="1384" y="882" width="14" height="14" fill="#e6e6e6" stroke="#555" stroke-width="0.6"/><g fill="#555"><rect x="1386" y="886" width="9" height="1"/><rect x="1386" y="888.5" width="9" height="1"/><rect x="1386" y="891" width="9" height="1"/></g><rect x="1422" y="880" width="12" height="9" fill="none" stroke="#e0e0e0" stroke-width="1.8"/><path d="M1436 883 V892 H1425" stroke="#e0e0e0" stroke-width="1.8" fill="none"/><path d="M1445 883 H1449 L1454 879 V893 L1449 889 H1445 Z" fill="#707070"/><path d="M1446 879 L1460 895" stroke="#707070" stroke-width="1.8"/><rect x="1469" y="879" width="11" height="17" fill="#52a01a"/><rect x="1472" y="877" width="5" height="2" fill="#52a01a"/><path d="M1475 882 L1471.5 888 H1475 L1473.5 893 L1478 886 H1474.5 Z" fill="#1d4a05"/><text x="1485" y="891" font-family="Liberation Sans, sans-serif" font-size="13.5" fill="#e8e8e8">72%</text><rect x="1519" y="878.5" width="15" height="11" fill="none" stroke="#e0e0e0" stroke-width="1.6"/><rect x="1523" y="892" width="7" height="1.6" fill="#e0e0e0"/><text x="1521" y="887" font-family="Liberation Sans, sans-serif" font-size="7" font-weight="bold" fill="#e0e0e0">zz</text><text x="1541" y="891" font-family="Liberation Sans, sans-serif" font-size="13.5" fill="#e8e8e8">10:08</text><circle cx="1589.5" cy="882" r="4" fill="#e0e0e0"/><path d="M1582 894 Q1582 887 1589.5 887 Q1597 887 1597 894 Z" fill="#e0e0e0"/><text x="35" y="891" font-family="Liberation Sans, sans-serif" font-size="13.5" fill="#e8e8e8">Menü</text><text x="210" y="891" font-family="Liberation Sans, sans-serif" font-size="13.5" fill="#e8e8e8">Nemo</text><text x="405" y="891" font-family="Liberation Sans, sans-serif" font-size="13.5" fill="#e8e8e8">Thunderbird</text><text x="536" y="891" font-family="Liberation Sans, sans-serif" font-size="13.5" fill="#e8e8e8">Firefox</text><text x="667" y="891" font-family="Liberation Sans, sans-serif" font-size="13.5" fill="#e8e8e8">SpeedCrunch</text><text x="798" y="891" font-family="Liberation Sans, sans-serif" font-size="13.5" fill="#e8e8e8">Code::Blocks ...</text><text x="929" y="891" font-family="Liberation Sans, sans-serif" font-size="13.5" fill="#e8e8e8">gedit</text><text x="1059" y="891" font-family="Liberation Sans, sans-serif" font-size="13.5" fill="#e8e8e8">IPMMotorSim</text><text x="1181" y="891" font-family="Liberation Sans, sans-serif" font-size="13.5" fill="#e8e8e8">3</text></svg>
</body></html>
